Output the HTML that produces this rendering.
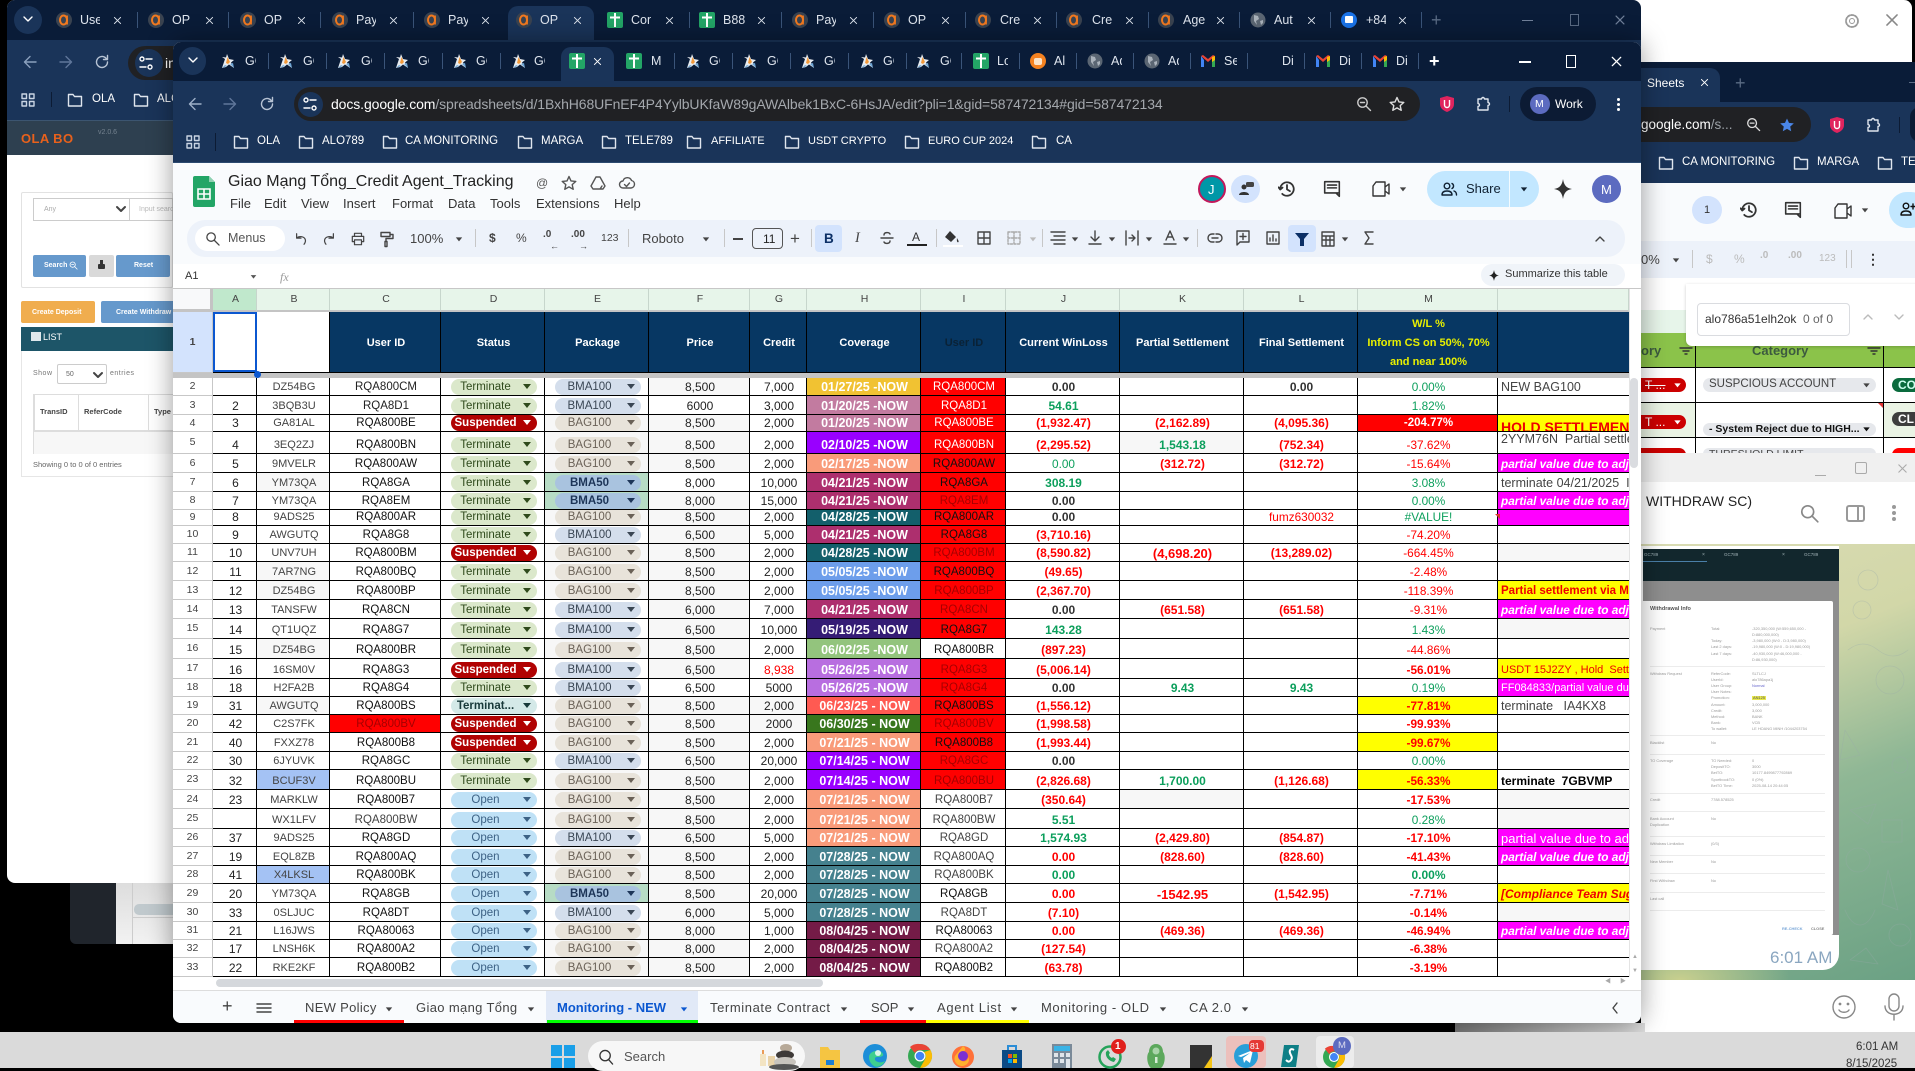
<!DOCTYPE html>
<html><head><meta charset="utf-8"><title>Giao Mang Tong</title>
<style>
*{box-sizing:border-box}
html,body{margin:0;padding:0;width:1915px;height:1068px;overflow:hidden;background:#000;font-family:"Liberation Sans","Noto Sans CJK SC",sans-serif}
.a{position:absolute}
.t{position:absolute;white-space:nowrap;line-height:1}
svg.a{overflow:visible}
.i{fill:none;stroke:currentColor;stroke-width:1.4;stroke-linecap:round;stroke-linejoin:round}
.tb{color:#dfe5ee;font-size:12.5px}
.bm{color:#fff;font-size:11.5px}
.mn{color:#333;font-size:13px}
.tl{color:#444;font-size:12px}
.sep{position:absolute;width:1px;background:#c7c7c7}
.vs{position:absolute;width:1px;height:16px;background:#3a5479}
#T{position:absolute;left:173px;top:289px;border-collapse:separate;border-spacing:0;table-layout:fixed;width:1456px;font:11.5px/15px "Liberation Sans",sans-serif;color:#222}
#T td,#T th{padding:0;border-right:1px solid #000;border-bottom:1px solid #000;text-align:center;overflow:hidden;white-space:nowrap;vertical-align:bottom}
#T td{padding-left:2px}
#T tr td:nth-child(7),#T tr td:nth-child(8){font-size:12px}
#T tr td:nth-child(3){font-size:11px}
#T tr td:nth-child(2){font-size:12px}
#T th{border-right:1px solid #c7c7c7;border-bottom:1px solid #c7c7c7;background:#fff;color:#444;font-size:10.5px;font-weight:normal;vertical-align:middle}
#T tr.L td,#T tr.L th{background:#e7f5ea;border-right:1px solid #c7d6cc;border-bottom:2px solid #c4c4c4;color:#444;font-size:10.5px;vertical-align:middle;font-weight:normal}
#T tr.H td{background:#073763;color:#fff;font-weight:bold;font-size:11px;line-height:19px;white-space:normal;vertical-align:middle;padding-top:3px}
.g{color:#444}
.f{background:#f7f7f7}
.p{display:inline-block;width:86px;height:16px;margin-top:-1px;line-height:16px;border-radius:8px;font-weight:normal;position:relative;vertical-align:top;padding-right:16px;font-size:11.5px}
.p:after{content:"";position:absolute;right:6px;top:5px;border:4px solid transparent;border-top:5px solid currentColor;border-bottom:0}
.te{background:#dbe8cb;color:#2f4a1c}
.tq{background:#d4e9e8;color:#18393a;font-weight:bold}
.su{background:#b10202;color:#fff;font-weight:bold}
.op{background:#bfe1f6;color:#3d6285}
.bm1{background:#d4deec;color:#3a4654}
.ba{background:#e8e3da;color:#6a6157}
.b5{background:#a9c3df;color:#1d3558;font-weight:bold}
.b5c{background:#b7dcc5}
.d{color:#fff;font-weight:bold;font-size:12.5px}
.r1{background:#f00;color:#fff}
.r2{background:#f00;color:#111}
.r3{background:#f00;color:#a60000}
.J{color:#f00;font-weight:bold;font-size:12px}
.G{color:#0c9f5c;font-weight:bold;font-size:12px}
.Z{color:#333;font-weight:bold;font-size:12px}
.M{color:#f00;font-size:11.8px}
.Ng{color:#0c9f5c;font-size:11.8px}
.Y{background:#ff0}
.n{text-align:left!important;padding-left:3px!important;border-right:0!important;color:#444;font-size:12.5px}
.mg{background:#f0f;color:#fff;font-weight:bold;font-style:italic;font-size:11.8px}
.ye{background:#ff0;color:#e00;font-weight:bold;font-size:11.5px}
.bl{background:#a4c2f4}
.md{font-size:3.9px;color:#9a9a9a}
.hr{position:absolute;left:1650px;width:175px;height:1px;background:#ececec}
</style></head><body>
<svg width="0" height="0" style="position:absolute">
<defs>
<symbol id="fd" viewBox="0 0 16 16"><path class="i" d="M1.5 2.5h4.5l1.5 2h7v9.5h-13z"/></symbol>
<symbol id="xx" viewBox="0 0 16 16"><path class="i" d="M3.5 3.5l9 9M12.5 3.5l-9 9"/></symbol>
<symbol id="gr" viewBox="0 0 16 16"><path class="i" d="M2 2h4.5v4.5H2zM9.5 2H14v4.5H9.5zM2 9.5h4.5V14H2zM9.5 9.5H14V14H9.5z"/></symbol>
<symbol id="bk" viewBox="0 0 16 16"><path class="i" d="M14 8H2.5M8 2.5L2.5 8 8 13.500"/></symbol>
<symbol id="fw" viewBox="0 0 16 16"><path class="i" d="M2 8h11.500M8 2.500L13.500 8 8 13.500"/></symbol>
<symbol id="rl" viewBox="0 0 16 16"><path class="i" d="M13.500 8a5.500 5.500 0 1 1-1.600-3.900L13.500 5.500M13.500 1.500v4h-4"/></symbol>
<symbol id="hs" viewBox="0 0 16 16"><path class="i" style="stroke-width:1.600" d="M2 8a6 6 0 1 1 1.800 4.300M.5 6.500L2 8.500l2-1.800M8 4.500V8.300l2.600 1.600"/></symbol>
<symbol id="zm" viewBox="0 0 16 16"><circle class="i" cx="6.500" cy="6.500" r="4.700"/><path class="i" d="M10 10l4.500 4.500M4.500 6.500h4"/></symbol>
<symbol id="st" viewBox="0 0 16 16"><path class="i" d="M8 1.500l2 4.400 4.800.5-3.600 3.200 1 4.700L8 11.900l-4.200 2.400 1-4.700L1.200 6.400 6 5.900z"/></symbol>
<symbol id="pz" viewBox="0 0 16 16"><path class="i" d="M3 3h3.500a1.500 1.500 0 0 1 3 0H13v3.500a1.500 1.500 0 0 1 0 3V14H3v-3.500a1.500 1.500 0 0 0 0-3z"/></symbol>
<symbol id="sl" viewBox="0 0 16 16"><circle class="i" cx="4" cy="4" r="2"/><circle class="i" cx="12" cy="12" r="2"/><path class="i" d="M8 4h6M2 12h6"/></symbol>
<symbol id="ol" viewBox="0 0 16 16"><circle cx="8" cy="8" r="8" fill="#3a4350"/><ellipse cx="7.500" cy="8" rx="3.500" ry="4.500" fill="none" stroke="#f47a1f" stroke-width="2"/><path d="M11 3.500v9" stroke="#f47a1f" stroke-width="1.800"/></symbol>
<symbol id="gs" viewBox="0 0 16 16"><rect x="0" width="16" height="16" rx="2" fill="#23a566"/><path d="M8 1v14M3 5.500h10" stroke="#fff" stroke-width="2"/></symbol>
<symbol id="gc" viewBox="0 0 16 16"><path d="M2 15L5 6 2 4l4 .5L7 1l2 5 5 1-3 2.500L14 15l-5-3.500L6 14z" fill="#e8ecf0"/><path d="M6 10l1.500-6L10 9l-2 2z" fill="#f39a3b"/><path d="M2 15l3-3 2 1zM10 11l4 4-1-5z" fill="#6ea6d6"/></symbol>
<symbol id="gl" viewBox="0 0 16 16"><circle cx="8" cy="8" r="7.500" fill="#5b6673"/><path d="M4 3l4 1 1 3-3 2 1 4-3-4zM10 9l3-1 0 3-2 2z" fill="#aab2bb"/></symbol>
<symbol id="gm" viewBox="0 0 16 16"><path d="M1 3v11h3V7z" fill="#4285f4"/><path d="M15 3v11h-3V7z" fill="#34a853"/><path d="M1 3l7 6 7-6-2-1-5 4-5-4z" fill="#ea4335"/><path d="M12 4l3-1v4l-3 2z" fill="#fbbc04"/></symbol>
<symbol id="ar" viewBox="-1 -1 10 10"><path d="M0 2h8L4 7z" fill="currentColor"/></symbol>
</defs></svg>

<!-- third window behind -->
<div class="a" style="left:70px;top:860px;width:110px;height:84px;background:#20252c;border-radius:0 0 0 6px"></div>
<div class="a" style="left:116px;top:880px;width:60px;height:64px;background:linear-gradient(#dcdcdc,#f2f2f2)"></div>
<div class="a" style="left:132px;top:880px;width:1px;height:64px;background:#ccc"></div>
<div class="a" style="left:134px;top:904px;width:45px;height:11px;background:#c0c9cd;border-radius:5px"></div>
<div class="a" style="left:132px;top:917px;width:45px;height:1px;background:#ccc"></div>

<!-- top right white window -->
<div class="a" style="left:1600px;top:0;width:312px;height:63px;background:#fff;border-radius:0 8px 0 0"></div>
<svg class="a" style="left:1844px;top:13px;color:#999" width="16" height="16" viewBox="0 0 16 16"><circle class="i" cx="8" cy="8" r="2.500" style="stroke-width:1"/><circle class="i" cx="8" cy="8" r="6" stroke-dasharray="2.500 1.400" style="stroke-width:1.800"/></svg>
<svg class="a" style="left:1883px;top:11px;color:#888" width="18" height="18"><use href="#xx"/></svg>

<!-- back chrome window -->
<div class="a" style="left:7px;top:0;width:1634px;height:883px;background:#fff;border-radius:8px;overflow:hidden">
 <div class="a" style="left:0;top:0;width:1634px;height:40px;background:#0a1c38"></div>
 <div class="a" style="left:0;top:40px;width:1634px;height:80px;background:#1a3459"></div>
 <div class="a" style="left:0;top:120px;width:1634px;height:35px;background:#2e4050;border-top:1px solid #3c5570"></div>
</div>
<div class="a" style="left:14px;top:6px;width:28px;height:28px;background:#1a3459;border-radius:14px"></div>
<svg class="a" style="left:22px;top:15px;color:#fff" width="12" height="10" viewBox="0 0 12 10"><path class="i" d="M2 2l4 4 4-4"/></svg>
<div class="a" style="left:508px;top:6px;width:86px;height:34px;background:#1a3459;border-radius:10px 10px 0 0"></div>

<svg class="a" style="left:56px;top:12px" width="16" height="16"><use href="#ol"/></svg><span class="t tb" style="left:80px;top:14px;width:20px;overflow:hidden">Use</span><svg class="a" style="left:112px;top:15px;color:#dfe5ee" width="11" height="11"><use href="#xx"/></svg><div class="vs" style="left:137px;top:12px"></div>
<svg class="a" style="left:148px;top:12px" width="16" height="16"><use href="#ol"/></svg><span class="t tb" style="left:172px;top:14px;width:20px;overflow:hidden">OP</span><svg class="a" style="left:204px;top:15px;color:#dfe5ee" width="11" height="11"><use href="#xx"/></svg><div class="vs" style="left:228px;top:12px"></div>
<svg class="a" style="left:240px;top:12px" width="16" height="16"><use href="#ol"/></svg><span class="t tb" style="left:264px;top:14px;width:20px;overflow:hidden">OP</span><svg class="a" style="left:296px;top:15px;color:#dfe5ee" width="11" height="11"><use href="#xx"/></svg><div class="vs" style="left:320px;top:12px"></div>
<svg class="a" style="left:332px;top:12px" width="16" height="16"><use href="#ol"/></svg><span class="t tb" style="left:356px;top:14px;width:20px;overflow:hidden">Pay</span><svg class="a" style="left:388px;top:15px;color:#dfe5ee" width="11" height="11"><use href="#xx"/></svg><div class="vs" style="left:413px;top:12px"></div>
<svg class="a" style="left:424px;top:12px" width="16" height="16"><use href="#ol"/></svg><span class="t tb" style="left:448px;top:14px;width:20px;overflow:hidden">Pay</span><svg class="a" style="left:480px;top:15px;color:#dfe5ee" width="11" height="11"><use href="#xx"/></svg>
<svg class="a" style="left:516px;top:12px" width="16" height="16"><use href="#ol"/></svg><span class="t tb" style="left:540px;top:14px;width:20px;overflow:hidden">OP</span><svg class="a" style="left:572px;top:15px;color:#dfe5ee" width="11" height="11"><use href="#xx"/></svg>
<svg class="a" style="left:607px;top:12px" width="16" height="16"><use href="#gs"/></svg><span class="t tb" style="left:631px;top:14px;width:20px;overflow:hidden">Con</span><svg class="a" style="left:664px;top:15px;color:#dfe5ee" width="11" height="11"><use href="#xx"/></svg><div class="vs" style="left:689px;top:12px"></div>
<svg class="a" style="left:699px;top:12px" width="16" height="16"><use href="#gs"/></svg><span class="t tb" style="left:723px;top:14px;width:22px;overflow:hidden">B88</span><svg class="a" style="left:756px;top:15px;color:#dfe5ee" width="11" height="11"><use href="#xx"/></svg><div class="vs" style="left:781px;top:12px"></div>
<svg class="a" style="left:792px;top:12px" width="16" height="16"><use href="#ol"/></svg><span class="t tb" style="left:816px;top:14px;width:20px;overflow:hidden">Pay</span><svg class="a" style="left:848px;top:15px;color:#dfe5ee" width="11" height="11"><use href="#xx"/></svg><div class="vs" style="left:873px;top:12px"></div>
<svg class="a" style="left:884px;top:12px" width="16" height="16"><use href="#ol"/></svg><span class="t tb" style="left:908px;top:14px;width:20px;overflow:hidden">OP</span><svg class="a" style="left:940px;top:15px;color:#dfe5ee" width="11" height="11"><use href="#xx"/></svg><div class="vs" style="left:965px;top:12px"></div>
<svg class="a" style="left:975px;top:12px" width="16" height="16"><use href="#ol"/></svg><span class="t tb" style="left:1000px;top:14px;width:21px;overflow:hidden">Cre</span><svg class="a" style="left:1032px;top:15px;color:#dfe5ee" width="11" height="11"><use href="#xx"/></svg><div class="vs" style="left:1056px;top:12px"></div>
<svg class="a" style="left:1066px;top:12px" width="16" height="16"><use href="#ol"/></svg><span class="t tb" style="left:1092px;top:14px;width:21px;overflow:hidden">Cre</span><svg class="a" style="left:1124px;top:15px;color:#dfe5ee" width="11" height="11"><use href="#xx"/></svg><div class="vs" style="left:1148px;top:12px"></div>
<svg class="a" style="left:1158px;top:12px" width="16" height="16"><use href="#ol"/></svg><span class="t tb" style="left:1183px;top:14px;width:22px;overflow:hidden">Age</span><svg class="a" style="left:1215px;top:15px;color:#dfe5ee" width="11" height="11"><use href="#xx"/></svg><div class="vs" style="left:1239px;top:12px"></div>
<svg class="a" style="left:1250px;top:12px" width="16" height="16"><use href="#gl"/></svg><span class="t tb" style="left:1274px;top:14px;width:21px;overflow:hidden">Aut</span><svg class="a" style="left:1306px;top:15px;color:#dfe5ee" width="11" height="11"><use href="#xx"/></svg><div class="vs" style="left:1330px;top:12px"></div>
<div class="a" style="left:1341px;top:12px;width:16px;height:16px;border-radius:8px;background:#1a73e8"></div><div class="a" style="left:1345px;top:16px;width:8px;height:7px;background:#fff;border-radius:1px"></div><span class="t tb" style="left:1366px;top:14px;width:20px;overflow:hidden">+84</span><svg class="a" style="left:1397px;top:15px;color:#dfe5ee" width="11" height="11"><use href="#xx"/></svg><div class="vs" style="left:1421px;top:12px"></div>
<span class="t" style="left:1431px;top:11px;color:#5a6b84;font-size:18px">+</span>
<div class="a" style="left:1522px;top:20px;width:11px;height:1px;background:#71819a"></div>
<div class="a" style="left:1570px;top:14px;width:9px;height:12px;border:1px solid #5a6b84"></div>
<svg class="a" style="left:1613px;top:13px;color:#71819a" width="14" height="14"><use href="#xx"/></svg>

<svg class="a" style="left:22px;top:54px;color:#8aa0bd" width="16" height="16"><use href="#bk"/></svg>
<svg class="a" style="left:58px;top:54px;color:#5f769a" width="16" height="16"><use href="#fw"/></svg>
<svg class="a" style="left:94px;top:54px;color:#b7c3d4" width="16" height="16"><use href="#rl"/></svg>
<div class="a" style="left:128px;top:46px;width:60px;height:34px;border-radius:17px 0 0 17px;background:#202124"></div>
<div class="a" style="left:135px;top:49px;width:28px;height:28px;border-radius:14px;background:#1a3459"></div>
<svg class="a" style="left:138px;top:55px;color:#fff" width="16" height="16"><use href="#sl"/></svg>
<span class="t" style="left:165px;top:56px;color:#fff;font-size:14px">in</span>
<svg class="a" style="left:20px;top:92px;color:#c9d4e3" width="16" height="16"><use href="#gr"/></svg>
<div class="a" style="left:51px;top:92px;width:1px;height:15px;background:#0c1b34"></div>
<svg class="a" style="left:67px;top:92px;color:#dfe5ee" width="16" height="16"><use href="#fd"/></svg><span class="t bm" style="left:92px;top:94px">OLA</span>
<svg class="a" style="left:133px;top:92px;color:#dfe5ee" width="16" height="16"><use href="#fd"/></svg><span class="t bm" style="left:157px;top:94px">ALO</span>

<span class="t" style="left:21px;top:132px;color:#e8611c;font-size:13px;font-weight:bold;letter-spacing:.4px">OLA BO</span>
<span class="t" style="left:98px;top:129px;color:#74828f;font-size:7px">v2.0.6</span>

<div class="a" style="left:21px;top:192px;width:152px;height:96px;background:#fff;border:1px solid #e2e2e2;border-radius:2px"></div>
<div class="a" style="left:33px;top:198px;width:140px;height:23px;border:1px solid #ccc"></div>
<div class="a" style="left:129px;top:198px;width:1px;height:23px;background:#ccc"></div>
<span class="t" style="left:44px;top:206px;color:#aaa;font-size:7px">Any</span>
<svg class="a" style="left:116px;top:205px;color:#444" width="10" height="8" viewBox="0 0 10 8"><path class="i" style="stroke-width:2" d="M1 2l4 4 4-4"/></svg>
<span class="t" style="left:139px;top:206px;color:#bbb;font-size:7px">Input search</span>
<div class="a" style="left:33px;top:255px;width:53px;height:22px;background:#6699cc;border-radius:2px"></div>
<span class="t" style="left:44px;top:262px;color:#fff;font-size:7px;font-weight:bold">Search</span>
<svg class="a" style="left:69px;top:261px;color:#fff" width="9" height="9"><use href="#zm"/></svg>
<div class="a" style="left:89px;top:255px;width:25px;height:22px;background:#d9d9d9;border-radius:2px"></div>
<div class="a" style="left:98px;top:264px;width:7px;height:5px;background:#333;border-radius:1px"></div>
<div class="a" style="left:100px;top:260px;width:3px;height:5px;background:#333"></div>
<div class="a" style="left:116px;top:255px;width:54px;height:22px;background:#6699cc;border-radius:2px"></div>
<span class="t" style="left:134px;top:262px;color:#fff;font-size:7px;font-weight:bold">Reset</span>
<div class="a" style="left:21px;top:301px;width:74px;height:22px;background:#f0ad4e;border-radius:2px"></div>
<span class="t" style="left:32px;top:309px;color:#fff;font-size:7px;font-weight:bold">Create Deposit</span>
<div class="a" style="left:101px;top:301px;width:75px;height:22px;background:#6699cc;border-radius:2px"></div>
<span class="t" style="left:116px;top:309px;color:#fff;font-size:7px;font-weight:bold">Create Withdraw</span>
<div class="a" style="left:21px;top:327px;width:155px;height:150px;border:1px solid #e6e6e6;background:#fff"></div>
<div class="a" style="left:21px;top:327px;width:155px;height:24px;background:#1d5568"></div>
<div class="a" style="left:31px;top:332px;width:10px;height:9px;background:#dfe8ec"></div>
<span class="t" style="left:43px;top:333px;color:#fff;font-size:9px">LIST</span>
<span class="t" style="left:33px;top:370px;color:#777;font-size:7px;letter-spacing:.5px">Show</span>
<div class="a" style="left:57px;top:364px;width:50px;height:20px;border:1px solid #ccc;border-radius:2px"></div>
<span class="t" style="left:66px;top:371px;color:#666;font-size:7px">50</span>
<svg class="a" style="left:93px;top:371px;color:#444" width="10" height="8" viewBox="0 0 10 8"><path class="i" style="stroke-width:2" d="M1 2l4 4 4-4"/></svg>
<span class="t" style="left:110px;top:370px;color:#777;font-size:7px;letter-spacing:.5px">entries</span>
<div class="a" style="left:33px;top:394px;width:143px;height:60px;border:1px solid #ddd;border-left:2px solid #ddd"></div>
<div class="a" style="left:34px;top:430px;width:142px;height:24px;background:#f7f7f7;border-top:2px solid #ddd"></div>
<div class="a" style="left:78px;top:394px;width:1px;height:36px;background:#ddd"></div>
<div class="a" style="left:148px;top:394px;width:1px;height:36px;background:#ddd"></div>
<span class="t" style="left:40px;top:408px;color:#444;font-size:7.500px;font-weight:bold">TransID</span>
<span class="t" style="left:84px;top:408px;color:#444;font-size:7.500px;font-weight:bold">ReferCode</span>
<span class="t" style="left:154px;top:408px;color:#444;font-size:7.500px;font-weight:bold">Type</span>
<span class="t" style="left:33px;top:461px;color:#666;font-size:7.500px">Showing 0 to 0 of 0 entries</span>

<!-- second chrome -->
<div class="a" style="left:1641px;top:62px;width:274px;height:40px;background:#0a1c38"></div>
<div class="a" style="left:1641px;top:68px;width:79px;height:34px;background:#1a3459;border-radius:0 10px 0 0"></div>
<div class="a" style="left:1641px;top:102px;width:274px;height:81px;background:#1a3459"></div>
<span class="t" style="left:1647px;top:77px;color:#fff;font-size:12px">Sheets</span>
<svg class="a" style="left:1699px;top:77px;color:#fff" width="11" height="11"><use href="#xx"/></svg>
<span class="t" style="left:1735px;top:74px;color:#5a6b84;font-size:18px">+</span>
<div class="a" style="left:1909px;top:82px;width:6px;height:1px;background:#5a6b84"></div>
<div class="a" style="left:1641px;top:107px;width:170px;height:35px;background:#202124;border-radius:0 18px 18px 0"></div>
<span class="t" style="left:1641px;top:118px;color:#fff;font-size:13.500px">google.com<span style="color:#9aa0a6">/s...</span></span>
<svg class="a" style="left:1746px;top:117px;color:#ddd" width="15" height="15"><use href="#zm"/></svg>
<svg class="a" style="left:1779px;top:117px" width="16" height="16" viewBox="0 0 16 16"><path fill="#4a86e8" d="M8 1.500l2 4.400 4.800.5-3.600 3.200 1 4.700L8 11.900l-4.200 2.400 1-4.700L1.200 6.400 6 5.900z"/></svg>
<svg class="a" style="left:1830px;top:117px" width="14" height="16" viewBox="0 0 14 16"><path fill="#e0245e" d="M7 0l7 2v6c0 4-3 6.500-7 8-4-1.500-7-4-7-8V2z"/><path d="M4.500 4v5a2.500 2.500 0 0 0 5 0V4" fill="none" stroke="#fff" stroke-width="1.400"/></svg>
<svg class="a" style="left:1865px;top:117px;color:#dfe5ee" width="16" height="16"><use href="#pz"/></svg>
<div class="a" style="left:1899px;top:117px;width:1px;height:16px;background:#0c1b34"></div>
<div class="a" style="left:1910px;top:107px;width:10px;height:35px;background:#0c1b34;border-radius:16px 0 0 16px"></div>
<svg class="a" style="left:1658px;top:155px;color:#dfe5ee" width="16" height="16"><use href="#fd"/></svg><span class="t bm" style="left:1682px;top:157px">CA MONITORING</span>
<svg class="a" style="left:1793px;top:155px;color:#dfe5ee" width="16" height="16"><use href="#fd"/></svg><span class="t bm" style="left:1817px;top:157px">MARGA</span>
<svg class="a" style="left:1877px;top:155px;color:#dfe5ee" width="16" height="16"><use href="#fd"/></svg><span class="t bm" style="left:1901px;top:157px">TELE</span>
<div class="a" style="left:1641px;top:183px;width:274px;height:270px;background:#fff"></div>
<div class="a" style="left:1641px;top:183px;width:274px;height:58px;background:#f9fbfd"></div>
<div class="a" style="left:1641px;top:241px;width:274px;height:37px;background:#edf2fa"></div>
<div class="a" style="left:1692px;top:196px;width:30px;height:28px;border-radius:15px;background:#d3e3fd"></div>
<span class="t" style="left:1704px;top:205px;color:#333;font-size:11px">1</span>
<svg class="a" style="left:1740px;top:201px;color:#333" width="18" height="18"><use href="#hs"/></svg>
<svg class="a" style="left:1784px;top:201px;color:#333" width="18" height="18" viewBox="0 0 16 16"><path class="i" d="M1.500 1.500h13v10h-13zM14.500 11.500v3l-3-3M4 4.500h8M4 7h8"/></svg>
<svg class="a" style="left:1833px;top:203px;color:#333" width="20" height="16" viewBox="0 0 20 16"><path class="i" d="M5 1h9v14H2V5zM14 6l4-3v10l-4-3"/></svg>
<svg class="a" style="left:1861px;top:206px;color:#444" width="8" height="8"><use href="#ar"/></svg>
<div class="a" style="left:1889px;top:192px;width:40px;height:36px;border-radius:18px;background:#c2e7ff"></div>
<svg class="a" style="left:1900px;top:202px;color:#111" width="16" height="14" viewBox="0 0 16 14"><circle class="i" cx="6" cy="4" r="2.800"/><path class="i" d="M1 13c0-3 2-4 5-4s5 1 5 4zM13 2v5M11 4.500h5"/></svg>
<span class="t" style="left:1641px;top:253px;color:#444;font-size:13px">0%</span>
<svg class="a" style="left:1672px;top:256px;color:#444" width="8" height="8"><use href="#ar"/></svg>
<div class="sep" style="left:1692px;top:250px;height:18px"></div>
<span class="t" style="left:1706px;top:253px;color:#bbb;font-size:12px">$</span>
<span class="t" style="left:1734px;top:253px;color:#bbb;font-size:12px">%</span>
<span class="t" style="left:1760px;top:251px;color:#bbb;font-size:10px;font-weight:bold">.0</span>
<span class="t" style="left:1788px;top:251px;color:#bbb;font-size:10px;font-weight:bold">.00</span>
<span class="t" style="left:1819px;top:254px;color:#bbb;font-size:10px">123</span>
<div class="sep" style="left:1846px;top:250px;height:18px"></div><div class="sep" style="left:1851px;top:250px;height:18px"></div>
<span class="t" style="left:1866px;top:252px;color:#333;font-size:14px;font-weight:bold">⋮</span>
<div class="a" style="left:1641px;top:310px;width:274px;height:23px;background:#e7f5ea"></div>
<div class="a" style="left:1641px;top:333px;width:274px;height:34px;background:#8bc34a"></div>
<span class="t" style="left:1641px;top:344px;color:#3c5a3f;font-size:13px;font-weight:bold">ory</span>
<span class="t" style="left:1752px;top:344px;color:#3c5a3f;font-size:13px;font-weight:bold">Category</span>
<svg class="a" style="left:1680px;top:347px;color:#333" width="12" height="8" viewBox="0 0 12 8"><path class="i" d="M0 1h12M3 4h6M5 7h2"/></svg>
<svg class="a" style="left:1868px;top:347px;color:#333" width="12" height="8" viewBox="0 0 12 8"><path class="i" d="M0 1h12M3 4h6M5 7h2"/></svg>
<div class="a" style="left:1641px;top:367px;width:274px;height:1px;background:#000"></div>
<div class="a" style="left:1641px;top:402px;width:274px;height:1px;background:#000"></div>
<div class="a" style="left:1641px;top:437px;width:274px;height:1px;background:#000"></div>
<div class="a" style="left:1641px;top:403px;width:54px;height:34px;background:#eaf3e4"></div>
<div class="a" style="left:1884px;top:403px;width:31px;height:34px;background:#eaf3e4"></div>
<div class="a" style="left:1695px;top:333px;width:1px;height:120px;background:#000"></div>
<div class="a" style="left:1883px;top:333px;width:1px;height:120px;background:#000"></div>
<div class="a" style="left:1641px;top:378px;width:45px;height:14px;background:#cc0000;border-radius:0 7px 7px 0"></div>
<span class="t" style="left:1645px;top:379px;color:#fff;font-size:12px;text-decoration:line-through">T ...</span>
<svg class="a" style="left:1673px;top:381px;color:#fff" width="9" height="8"><use href="#ar"/></svg>
<div class="a" style="left:1641px;top:415px;width:45px;height:14px;background:#cc0000;border-radius:0 7px 7px 0"></div>
<span class="t" style="left:1645px;top:416px;color:#fff;font-size:12px">T ...</span>
<svg class="a" style="left:1673px;top:418px;color:#fff" width="9" height="8"><use href="#ar"/></svg>
<div class="a" style="left:1641px;top:448px;width:45px;height:14px;background:#cc0000;border-radius:0 7px 7px 0"></div>
<div class="a" style="left:1703px;top:378px;width:173px;height:14px;background:#e6e8ec;border-radius:7px"></div>
<span class="t" style="left:1709px;top:379px;color:#444;font-size:11.500px">SUSPCIOUS ACCOUNT</span>
<svg class="a" style="left:1862px;top:381px;color:#444" width="9" height="8"><use href="#ar"/></svg>
<div class="a" style="left:1703px;top:423px;width:173px;height:13px;background:#e6e8ec;border-radius:7px"></div>
<span class="t" style="left:1709px;top:424px;color:#111;font-size:10.500px;font-weight:bold">- System Reject due to HIGH...</span>
<svg class="a" style="left:1862px;top:425px;color:#111" width="9" height="8"><use href="#ar"/></svg>
<div class="a" style="left:1703px;top:448px;width:173px;height:12px;background:#e6e8ec;border-radius:7px"></div>
<span class="t" style="left:1709px;top:449px;color:#444;font-size:10.500px">THRESHOLD LIMIT</span>
<svg class="a" style="left:1878px;top:403px" width="5" height="5"><path d="M0 0h5v5z" fill="#d33"/></svg>
<div class="a" style="left:1892px;top:378px;width:30px;height:14px;background:#0a6b3d;border-radius:7px 0 0 7px"></div>
<span class="t" style="left:1898px;top:379px;color:#cfe;font-size:12px;font-weight:bold">CO</span>
<div class="a" style="left:1892px;top:412px;width:30px;height:14px;background:#3d3d3d;border-radius:7px 0 0 7px"></div>
<span class="t" style="left:1898px;top:413px;color:#fff;font-size:12px;font-weight:bold">CL</span>
<div class="a" style="left:1892px;top:448px;width:30px;height:14px;background:#f00;border-radius:7px 0 0 7px"></div>
<div class="a" style="left:1686px;top:284px;width:232px;height:62px;background:#fff;border-radius:0 0 0 6px;box-shadow:0 1px 3px rgba(0,0,0,.2)"></div>
<div class="a" style="left:1697px;top:303px;width:153px;height:33px;border:1px solid #dadce0;border-radius:4px;background:#fff"></div>
<span class="t" style="left:1705px;top:313px;color:#333;font-size:12px">alo786a51elh2ok</span>
<span class="t" style="left:1803px;top:313px;color:#666;font-size:12px">0 of 0</span>
<svg class="a" style="left:1863px;top:313px;color:#bbb" width="10" height="8" viewBox="0 0 10 8"><path class="i" d="M1 6l4-4 4 4"/></svg>
<svg class="a" style="left:1894px;top:313px;color:#bbb" width="10" height="8" viewBox="0 0 10 8"><path class="i" d="M1 2l4 4 4-4"/></svg>

<!-- telegram -->
<div class="a" style="left:1641px;top:453px;width:274px;height:579px;background:#fff"></div>
<div class="a" style="left:1641px;top:453px;width:274px;height:29px;background:#f0f0f0"></div>
<div class="a" style="left:1815px;top:475px;width:11px;height:1px;background:#aaa"></div>
<div class="a" style="left:1855px;top:462px;width:12px;height:12px;border:1px solid #aaa;border-radius:2px"></div>
<svg class="a" style="left:1896px;top:462px;color:#aaa" width="13" height="13"><use href="#xx"/></svg>
<span class="t" style="left:1646px;top:494px;color:#222;font-size:14px">WITHDRAW SC)</span>
<svg class="a" style="left:1800px;top:504px;color:#888" width="19" height="19" viewBox="0 0 16 16"><circle class="i" cx="6.500" cy="6.500" r="5"/><path class="i" d="M10 10l5 5"/></svg>
<div class="a" style="left:1846px;top:505px;width:19px;height:17px;border:2px solid #999;border-radius:3px"></div><div class="a" style="left:1857px;top:505px;width:2px;height:17px;background:#999"></div>
<div class="a" style="left:1892px;top:505px;width:4px;height:4px;border-radius:2px;background:#999"></div><div class="a" style="left:1892px;top:511px;width:4px;height:4px;border-radius:2px;background:#999"></div><div class="a" style="left:1892px;top:517px;width:4px;height:4px;border-radius:2px;background:#999"></div>
<div class="a" style="left:1640px;top:544px;width:275px;height:436px;background:radial-gradient(ellipse 110px 50px at 40px 436px,#c8cf8e,transparent),linear-gradient(158deg,#dadcb4 0%,#d2d7a8 30%,#8fb795 58%,#6ba184 100%)"></div>
<svg class="a" style="left:1840px;top:550px;color:#9aa;opacity:.35" width="75" height="430" viewBox="0 0 75 430"><g class="i" style="stroke-width:.8"><circle cx="28" cy="30" r="10"/><circle cx="22" cy="60" r="9"/><path d="M8 100c10-8 20-8 30 0s20 8 30 0"/><circle cx="50" cy="130" r="14"/><path d="M5 180l15 25-20 5z"/><circle cx="60" cy="215" r="8"/><path d="M10 260l18 14 8-20zM42 270h20v22H42z"/><circle cx="18" cy="310" r="12"/><path d="M48 320l10 40-16-6zM5 360c8 20 22 20 30 0"/><circle cx="60" cy="385" r="11"/><path d="M10 410l16-12 12 16z"/></g></svg>
<div class="a" style="left:1640px;top:546px;width:199px;height:424px;background:#fff;border-radius:0 0 16px 0"></div>
<div class="a" style="left:1643px;top:549px;width:196px;height:32px;background:#12272d"></div>
<div class="a" style="left:1643px;top:561px;width:64px;height:1px;background:#4a7fa8"></div>
<span class="t" style="left:1644px;top:553px;color:#9fb0b5;font-size:4.500px">GC789</span>
<span class="t" style="left:1702px;top:553px;color:#9fb0b5;font-size:5px">×</span>
<span class="t" style="left:1724px;top:553px;color:#9fb0b5;font-size:4.500px">GC789</span>
<span class="t" style="left:1782px;top:553px;color:#9fb0b5;font-size:5px">×</span>
<span class="t" style="left:1804px;top:553px;color:#9fb0b5;font-size:4.500px">GC789</span>
<div class="a" style="left:1643px;top:581px;width:196px;height:354px;background:#8e8e8e"></div>
<div class="a" style="left:1640px;top:601px;width:193px;height:334px;background:#fff;border-radius:2px"></div>
<span class="t" style="left:1650px;top:607px;color:#555;font-size:5.500px;font-weight:bold">Withdrawal Info</span>
<span class="t md" style="left:1650px;top:627px">Payment</span><span class="t md" style="left:1711px;top:627px">Total:</span><span class="t md" style="left:1752px;top:627px">-320,350,000 (W:559,650,000 -</span>
<span class="t md" style="left:1752px;top:633px">D:880,000,000)</span>
<span class="t md" style="left:1711px;top:639px">Today:</span><span class="t md" style="left:1752px;top:639px">-3,980,000 (W:0 - D:3,980,000)</span>
<span class="t md" style="left:1711px;top:645px">Last 2 days:</span><span class="t md" style="left:1752px;top:645px">-19,980,000 (W:0 - D:19,980,000)</span>
<span class="t md" style="left:1711px;top:652px">Last 7 days:</span><span class="t md" style="left:1752px;top:652px">-40,930,000 (W:46,000,000 -</span>
<span class="t md" style="left:1752px;top:658px">D:86,930,000)</span>
<div class="hr" style="top:666px"></div>
<span class="t md" style="left:1650px;top:672px">Withdraw Request</span><span class="t md" style="left:1711px;top:672px">ReferCode:</span><span class="t md" style="left:1752px;top:672px">SLTLCJ</span>
<span class="t md" style="left:1711px;top:678px">UserId:</span><span class="t md" style="left:1752px;top:678px">alo786apa1j</span>
<span class="t md" style="left:1711px;top:684px">User Group:</span><span class="t md" style="left:1752px;top:684px;color:#66c">Normal</span>
<span class="t md" style="left:1711px;top:690px">User Notes:</span>
<span class="t md" style="left:1711px;top:696px">Promotion:</span><span class="t md" style="left:1752px;top:696px;background:#e8e84c;color:#555;padding:0 1px">AN125</span>
<span class="t md" style="left:1711px;top:703px">Amount:</span><span class="t md" style="left:1752px;top:703px">3,000,000</span>
<span class="t md" style="left:1711px;top:709px">Credit:</span><span class="t md" style="left:1752px;top:709px">3,000</span>
<span class="t md" style="left:1711px;top:715px">Method:</span><span class="t md" style="left:1752px;top:715px">BANK</span>
<span class="t md" style="left:1711px;top:721px">Bank:</span><span class="t md" style="left:1752px;top:721px">VCB</span>
<span class="t md" style="left:1711px;top:727px">To wallet:</span><span class="t md" style="left:1752px;top:727px">LE HOANG MINH /1044203754</span>
<div class="hr" style="top:735px"></div>
<span class="t md" style="left:1650px;top:741px">Blacklist</span><span class="t md" style="left:1711px;top:741px">No</span>
<div class="hr" style="top:754px"></div>
<span class="t md" style="left:1650px;top:759px">TO Coverage</span><span class="t md" style="left:1711px;top:759px">TO Needed:</span><span class="t md" style="left:1752px;top:759px">0</span>
<span class="t md" style="left:1711px;top:765px">DepositTO:</span><span class="t md" style="left:1752px;top:765px">3000</span>
<span class="t md" style="left:1711px;top:771px">BetTO:</span><span class="t md" style="left:1752px;top:771px">10177.8499877792869</span>
<span class="t md" style="left:1711px;top:778px">SportbookTO:</span><span class="t md" style="left:1752px;top:778px">0 (0%)</span>
<span class="t md" style="left:1711px;top:784px">BetTO Time:</span><span class="t md" style="left:1752px;top:784px">2025-08-14 20:44:05</span>
<div class="hr" style="top:793px"></div>
<span class="t md" style="left:1650px;top:798px">Credit</span><span class="t md" style="left:1711px;top:798px">7788.578525</span>
<div class="hr" style="top:811px"></div>
<span class="t md" style="left:1650px;top:817px">Bank Account</span><span class="t md" style="left:1711px;top:817px">No</span>
<span class="t md" style="left:1650px;top:823px">Duplication</span>
<div class="hr" style="top:836px"></div>
<span class="t md" style="left:1650px;top:842px">Withdraw Limitation</span><span class="t md" style="left:1711px;top:842px">(0/3)</span>
<div class="hr" style="top:855px"></div>
<span class="t md" style="left:1650px;top:860px">New Member</span><span class="t md" style="left:1711px;top:860px">No</span>
<div class="hr" style="top:873px"></div>
<span class="t md" style="left:1650px;top:879px">First Withdraw</span><span class="t md" style="left:1711px;top:879px">No</span>
<div class="hr" style="top:892px"></div>
<span class="t md" style="left:1650px;top:897px">Last call</span>
<div class="hr" style="top:910px"></div>
<span class="t md" style="left:1782px;top:927px;color:#7aa7d8;font-weight:bold">RE-CHECK</span>
<span class="t md" style="left:1811px;top:927px;color:#888;font-weight:bold">CLOSE</span>
<span class="t" style="left:1770px;top:949px;color:#8aa6c0;font-size:17px">6:01 AM</span>
<svg class="a" style="left:1832px;top:995px;color:#888" width="24" height="24" viewBox="0 0 24 24"><circle class="i" cx="12" cy="12" r="11"/><circle cx="8" cy="9" r="1.400" fill="#888"/><circle cx="16" cy="9" r="1.400" fill="#888"/><path class="i" d="M7 15c2 3 8 3 10 0"/></svg>
<svg class="a" style="left:1884px;top:993px;color:#888" width="20" height="28" viewBox="0 0 20 28"><rect class="i" x="5" y="1" width="10" height="17" rx="5"/><path class="i" d="M1 13c0 11 18 11 18 0M10 22v5"/></svg>
<div class="a" style="left:1455px;top:1023px;width:190px;height:10px;background:linear-gradient(90deg,#777,#ddd)"></div>

<!-- front chrome -->
<div class="a" style="left:173px;top:42px;width:1468px;height:981px;background:#fff;border-radius:8px 8px 8px 8px;box-shadow:0 0 26px rgba(0,0,0,.4);overflow:hidden">
 <div class="a" style="left:0;top:0;width:1468px;height:39px;background:#0a1c38"></div>
 <div class="a" style="left:0;top:39px;width:1468px;height:81px;background:#1a3459"></div>
 <div class="a" style="left:0;top:120px;width:1468px;height:1px;background:#2c4a70"></div>
 <div class="a" style="left:0;top:121px;width:1468px;height:101px;background:#f9fbfd"></div>
 <div class="a" style="left:14px;top:178px;width:1438px;height:37px;background:#edf2fa;border-radius:18px"></div>
</div>
<div class="a" style="left:179px;top:47px;width:27px;height:28px;background:#1a3459;border-radius:14px"></div>
<svg class="a" style="left:187px;top:56px;color:#fff" width="12" height="10" viewBox="0 0 12 10"><path class="i" d="M2 2l4 4 4-4"/></svg>
<div class="a" style="left:561px;top:47px;width:53px;height:34px;background:#1a3459;border-radius:10px 10px 0 0"></div>

<svg class="a" style="left:220px;top:53px" width="16" height="16"><use href="#gc"/></svg><span class="t tb" style="left:245px;top:55px;width:11px;overflow:hidden">GC</span><div class="vs" style="left:268px;top:53px"></div>
<svg class="a" style="left:278px;top:53px" width="16" height="16"><use href="#gc"/></svg><span class="t tb" style="left:303px;top:55px;width:11px;overflow:hidden">GC</span><div class="vs" style="left:326px;top:53px"></div>
<svg class="a" style="left:336px;top:53px" width="16" height="16"><use href="#gc"/></svg><span class="t tb" style="left:361px;top:55px;width:11px;overflow:hidden">GC</span><div class="vs" style="left:384px;top:53px"></div>
<svg class="a" style="left:394px;top:53px" width="16" height="16"><use href="#gc"/></svg><span class="t tb" style="left:418px;top:55px;width:11px;overflow:hidden">GC</span><div class="vs" style="left:442px;top:53px"></div>
<svg class="a" style="left:452px;top:53px" width="16" height="16"><use href="#gc"/></svg><span class="t tb" style="left:476px;top:55px;width:11px;overflow:hidden">GC</span><div class="vs" style="left:500px;top:53px"></div>
<svg class="a" style="left:511px;top:53px" width="16" height="16"><use href="#gc"/></svg><span class="t tb" style="left:534px;top:55px;width:11px;overflow:hidden">GC</span>
<svg class="a" style="left:569px;top:53px" width="16" height="16"><use href="#gs"/></svg><svg class="a" style="left:592px;top:56px;color:#fff" width="11" height="11"><use href="#xx"/></svg>
<svg class="a" style="left:626px;top:53px" width="16" height="16"><use href="#gs"/></svg><span class="t tb" style="left:651px;top:55px;width:11px;overflow:hidden">MC</span><div class="vs" style="left:674px;top:53px"></div>
<svg class="a" style="left:685px;top:53px" width="16" height="16"><use href="#gc"/></svg><span class="t tb" style="left:709px;top:55px;width:11px;overflow:hidden">GC</span><div class="vs" style="left:732px;top:53px"></div>
<svg class="a" style="left:742px;top:53px" width="16" height="16"><use href="#gc"/></svg><span class="t tb" style="left:767px;top:55px;width:11px;overflow:hidden">GC</span><div class="vs" style="left:790px;top:53px"></div>
<svg class="a" style="left:800px;top:53px" width="16" height="16"><use href="#gc"/></svg><span class="t tb" style="left:824px;top:55px;width:11px;overflow:hidden">GC</span><div class="vs" style="left:848px;top:53px"></div>
<svg class="a" style="left:859px;top:53px" width="16" height="16"><use href="#gc"/></svg><span class="t tb" style="left:883px;top:55px;width:11px;overflow:hidden">GC</span><div class="vs" style="left:906px;top:53px"></div>
<svg class="a" style="left:915px;top:53px" width="16" height="16"><use href="#gc"/></svg><span class="t tb" style="left:940px;top:55px;width:11px;overflow:hidden">GC</span><div class="vs" style="left:961px;top:53px"></div>
<svg class="a" style="left:973px;top:53px" width="16" height="16"><use href="#gs"/></svg><span class="t tb" style="left:997px;top:55px;width:11px;overflow:hidden">Lo</span><div class="vs" style="left:1019px;top:53px"></div>
<div class="a" style="left:1030px;top:53px;width:16px;height:16px;border-radius:8px;background:#f58220"></div><div class="a" style="left:1034px;top:58px;width:8px;height:7px;background:#fbe3c8;border-radius:2px"></div><span class="t tb" style="left:1054px;top:55px;width:11px;overflow:hidden">Al</span><div class="vs" style="left:1076px;top:53px"></div>
<svg class="a" style="left:1087px;top:53px" width="16" height="16"><use href="#gl"/></svg><span class="t tb" style="left:1111px;top:55px;width:11px;overflow:hidden">Ad</span><div class="vs" style="left:1133px;top:53px"></div>
<svg class="a" style="left:1144px;top:53px" width="16" height="16"><use href="#gl"/></svg><span class="t tb" style="left:1168px;top:55px;width:11px;overflow:hidden">Ad</span><div class="vs" style="left:1190px;top:53px"></div>
<svg class="a" style="left:1200px;top:53px" width="16" height="16"><use href="#gm"/></svg><span class="t tb" style="left:1224px;top:55px;width:13px;overflow:hidden">Se</span><div class="vs" style="left:1247px;top:53px"></div>
<span class="t tb" style="left:1282px;top:55px;width:11px;overflow:hidden">Di</span><div class="vs" style="left:1304px;top:53px"></div>
<svg class="a" style="left:1315px;top:53px" width="16" height="16"><use href="#gm"/></svg><span class="t tb" style="left:1339px;top:55px;width:11px;overflow:hidden">Di</span><div class="vs" style="left:1361px;top:53px"></div>
<svg class="a" style="left:1372px;top:53px" width="16" height="16"><use href="#gm"/></svg><span class="t tb" style="left:1396px;top:55px;width:11px;overflow:hidden">Di</span><div class="vs" style="left:1418px;top:53px"></div>
<span class="t" style="left:1429px;top:52px;color:#fff;font-size:18px;font-weight:bold">+</span>
<div class="a" style="left:1519px;top:61px;width:12px;height:1.500px;background:#fff"></div>
<div class="a" style="left:1566px;top:55px;width:10px;height:13px;border:1.500px solid #fff"></div>
<svg class="a" style="left:1609px;top:54px;color:#fff" width="15" height="15"><use href="#xx"/></svg>

<svg class="a" style="left:187px;top:96px;color:#9eb0c8" width="16" height="16"><use href="#bk"/></svg>
<svg class="a" style="left:222px;top:96px;color:#5f769a" width="16" height="16"><use href="#fw"/></svg>
<svg class="a" style="left:259px;top:96px;color:#b7c3d4" width="16" height="16"><use href="#rl"/></svg>
<div class="a" style="left:294px;top:87px;width:1126px;height:34px;background:#202124;border-radius:17px"></div>
<div class="a" style="left:298px;top:92px;width:25px;height:25px;background:#1a3459;border-radius:13px"></div>
<svg class="a" style="left:302px;top:96px;color:#fff" width="16" height="16"><use href="#sl"/></svg>
<span class="t" id="url" style="left:331px;top:97px;color:#fff;font-size:14px;letter-spacing:-.1px">docs.google.com<span style="color:#a4a8ad">/spreadsheets/d/1BxhH68UFnEF4P4YylbUKfaW89gAWAlbek1BxC-6HsJA/edit?pli=1&amp;gid=587472134#gid=587472134</span></span>
<svg class="a" style="left:1356px;top:96px;color:#ccc" width="16" height="16"><use href="#zm"/></svg>
<svg class="a" style="left:1389px;top:96px;color:#ddd" width="16" height="16"><use href="#st"/></svg>
<svg class="a" style="left:1440px;top:96px" width="14" height="16" viewBox="0 0 14 16"><path fill="#e0245e" d="M7 0l7 2v6c0 4-3 6.500-7 8-4-1.500-7-4-7-8V2z"/><path d="M4.500 4v5a2.500 2.500 0 0 0 5 0V4" fill="none" stroke="#fff" stroke-width="1.400"/></svg>
<svg class="a" style="left:1475px;top:96px;color:#dfe5ee" width="16" height="16"><use href="#pz"/></svg>
<div class="a" style="left:1509px;top:96px;width:1px;height:16px;background:#0c1b34"></div>
<div class="a" style="left:1520px;top:87px;width:76px;height:34px;background:#0c1b34;border-radius:17px"></div>
<div class="a" style="left:1530px;top:94px;width:20px;height:20px;background:#5c6bc0;border-radius:10px"></div>
<span class="t" style="left:1535px;top:99px;color:#fff;font-size:10.500px">M</span>
<span class="t" style="left:1555px;top:98px;color:#fff;font-size:12px">Work</span>
<div class="a" style="left:1617px;top:98px;width:3px;height:3px;border-radius:2px;background:#fff"></div><div class="a" style="left:1617px;top:103px;width:3px;height:3px;border-radius:2px;background:#fff"></div><div class="a" style="left:1617px;top:108px;width:3px;height:3px;border-radius:2px;background:#fff"></div>

<svg class="a" style="left:185px;top:134px;color:#c9d4e3" width="16" height="16"><use href="#gr"/></svg>
<div class="a" style="left:215px;top:133px;width:1px;height:18px;background:#0c1b34"></div>
<svg class="a" style="left:233px;top:134px;color:#dfe5ee" width="16" height="16"><use href="#fd"/></svg><span class="t bm" style="left:257px;top:136px">OLA</span>
<svg class="a" style="left:298px;top:134px;color:#dfe5ee" width="16" height="16"><use href="#fd"/></svg><span class="t bm" style="left:322px;top:136px">ALO789</span>
<svg class="a" style="left:382px;top:134px;color:#dfe5ee" width="16" height="16"><use href="#fd"/></svg><span class="t bm" style="left:405px;top:136px">CA MONITORING</span>
<svg class="a" style="left:517px;top:134px;color:#dfe5ee" width="16" height="16"><use href="#fd"/></svg><span class="t bm" style="left:541px;top:136px">MARGA</span>
<svg class="a" style="left:601px;top:134px;color:#dfe5ee" width="16" height="16"><use href="#fd"/></svg><span class="t bm" style="left:625px;top:136px">TELE789</span>
<svg class="a" style="left:686px;top:134px;color:#dfe5ee" width="16" height="16"><use href="#fd"/></svg><span class="t bm" style="left:711px;top:136px;font-size:11px">AFFILIATE</span>
<svg class="a" style="left:784px;top:134px;color:#dfe5ee" width="16" height="16"><use href="#fd"/></svg><span class="t bm" style="left:808px;top:136px;font-size:11px">USDT CRYPTO</span>
<svg class="a" style="left:904px;top:134px;color:#dfe5ee" width="16" height="16"><use href="#fd"/></svg><span class="t bm" style="left:928px;top:136px;font-size:11px">EURO CUP 2024</span>
<svg class="a" style="left:1031px;top:134px;color:#dfe5ee" width="16" height="16"><use href="#fd"/></svg><span class="t bm" style="left:1056px;top:136px">CA</span>

<!-- sheets header -->
<svg class="a" style="left:193px;top:176px" width="22" height="31" viewBox="0 0 22 31"><path d="M2 0h14l6 6v23a2 2 0 0 1-2 2H2a2 2 0 0 1-2-2V2a2 2 0 0 1 2-2z" fill="#23a566"/><path d="M16 0l6 6h-6z" fill="#8ed1b1"/><path d="M5 13h12v10H5zM5 18h12M11 13v10" fill="none" stroke="#fff" stroke-width="1.600"/></svg>
<span class="t" id="ttl" style="left:228px;top:174px;color:#222;font-size:16px">Giao Mạng Tổng_Credit Agent_Tracking</span>
<span class="t" style="left:536px;top:177px;color:#555;font-size:12px">@</span>
<svg class="a" style="left:561px;top:175px;color:#555" width="16" height="16"><use href="#st"/></svg>
<svg class="a" style="left:590px;top:175px;color:#555" width="16" height="16" viewBox="0 0 16 16"><path class="i" d="M6 2h4l5 9-2 3H3l-2-3zM6 2L1 11M10 14l2-3"/></svg>
<svg class="a" style="left:619px;top:175px;color:#555" width="16" height="16" viewBox="0 0 16 16"><path class="i" d="M4 13a3.500 3.500 0 0 1 0-7 4.500 4.500 0 0 1 8.500-.5A3.800 3.800 0 0 1 12 13zM5.500 9.500l2 2 3-3.500"/></svg>
<span class="t mn" style="left:230px;top:197px">File</span>
<span class="t mn" style="left:264px;top:197px">Edit</span>
<span class="t mn" style="left:301px;top:197px">View</span>
<span class="t mn" style="left:343px;top:197px">Insert</span>
<span class="t mn" style="left:392px;top:197px">Format</span>
<span class="t mn" style="left:448px;top:197px">Data</span>
<span class="t mn" style="left:490px;top:197px">Tools</span>
<span class="t mn" style="left:536px;top:197px">Extensions</span>
<span class="t mn" style="left:614px;top:197px">Help</span>
<div class="a" style="left:1198px;top:175px;width:28px;height:28px;border-radius:14px;background:#0097a7;border:2px solid #c2185b"></div>
<span class="t" style="left:1208px;top:183px;color:#fff;font-size:13px">J</span>
<div class="a" style="left:1231px;top:175px;width:29px;height:28px;border-radius:14px;background:#d3e3fd"></div>
<svg class="a" style="left:1238px;top:181px" width="16" height="16" viewBox="0 0 16 16"><circle cx="6" cy="6" r="2.500" fill="#333"/><path d="M1 14c0-4 10-4 10 0z" fill="#333"/><rect x="8" y="1" width="8" height="5" rx="1.500" fill="#444"/></svg>
<svg class="a" style="left:1278px;top:180px;color:#333" width="18" height="18"><use href="#hs"/></svg>
<svg class="a" style="left:1323px;top:180px;color:#333" width="18" height="18" viewBox="0 0 16 16"><path class="i" d="M1.500 1.500h13v10h-13zM14.500 11.500v3l-3-3M4 4.500h8M4 7h8"/></svg>
<svg class="a" style="left:1371px;top:181px;color:#333" width="20" height="16" viewBox="0 0 20 16"><path class="i" d="M5 1h9v14H2V5zM14 6l4-3v10l-4-3"/></svg>
<svg class="a" style="left:1399px;top:185px;color:#444" width="8" height="8"><use href="#ar"/></svg>
<div class="a" style="left:1427px;top:171px;width:112px;height:36px;border-radius:18px;background:#c2e7ff"></div>
<div class="a" style="left:1509px;top:171px;width:1px;height:36px;background:#f3fbff"></div>
<svg class="a" style="left:1441px;top:182px;color:#123" width="16" height="14" viewBox="0 0 16 14"><circle class="i" cx="6" cy="4" r="2.800"/><path class="i" d="M1 13c0-3 2-4 5-4s5 1 5 4zM11 1.500a2.800 2.800 0 0 1 0 5M13 9c1.500.5 2.500 2 2.500 4"/></svg>
<span class="t" style="left:1466px;top:182px;color:#123;font-size:13px">Share</span>
<svg class="a" style="left:1520px;top:185px;color:#123" width="8" height="8"><use href="#ar"/></svg>
<svg class="a" style="left:1554px;top:179px" width="18" height="20" viewBox="0 0 18 20"><path d="M9 0c1 6 3 9 9 10-6 1-8 4-9 10-1-6-3-9-9-10 6-1 8-4 9-10z" fill="#333"/></svg>
<div class="a" style="left:1592px;top:175px;width:29px;height:28px;border-radius:14px;background:#5c6bc0"></div>
<span class="t" style="left:1601px;top:183px;color:#fff;font-size:13px">M</span>

<!-- sheets toolbar -->
<div class="a" style="left:195px;top:226px;width:90px;height:25px;background:#fff;border-radius:13px"></div>
<svg class="a" style="left:205px;top:231px;color:#444" width="15" height="15" viewBox="0 0 16 16"><circle class="i" cx="6.500" cy="6.500" r="4.500"/><path class="i" d="M10 10l5 5"/></svg>
<span class="t" style="left:228px;top:232px;color:#555;font-size:12.500px">Menus</span>
<svg class="a" style="left:294px;top:232px;color:#444" width="14" height="14" viewBox="0 0 16 16"><path class="i" d="M3 2v5h5M3 7c3-3 9-2 10 2 .4 2-.3 3.500-1.500 5"/></svg>
<svg class="a" style="left:322px;top:232px;color:#444" width="14" height="14" viewBox="0 0 16 16"><path class="i" d="M13 2v5H8M13 7C10 4 4 5 3 9c-.4 2 .3 3.500 1.500 5"/></svg>
<svg class="a" style="left:351px;top:232px;color:#444" width="14" height="14" viewBox="0 0 16 16"><path class="i" d="M4 5V1.500h8V5M4 11H1.500V5h13v6H12M4 9h8v5.500H4z"/></svg>
<svg class="a" style="left:380px;top:231px;color:#444" width="14" height="16" viewBox="0 0 14 16"><path class="i" d="M1 1.500h9v4H1zM10 3.500h3v4H6v3M5 10.500h2v5H5z"/></svg>
<span class="t tl" style="left:410px;top:232px;font-size:13px">100%</span>
<svg class="a" style="left:455px;top:235px;color:#444" width="8" height="8"><use href="#ar"/></svg>
<div class="sep" style="left:475px;top:229px;height:18px"></div>
<span class="t tl" style="left:489px;top:232px;font-weight:bold">$</span>
<span class="t tl" style="left:516px;top:232px">%</span>
<span class="t tl" style="left:543px;top:230px;font-size:10px;font-weight:bold">.0</span><span class="t tl" style="left:550px;top:242px;font-size:9px">←</span>
<span class="t tl" style="left:571px;top:230px;font-size:10px;font-weight:bold">.00</span><span class="t tl" style="left:579px;top:242px;font-size:9px">→</span>
<span class="t tl" style="left:601px;top:233px;font-size:10.500px">123</span>
<div class="sep" style="left:628px;top:229px;height:18px"></div>
<span class="t tl" style="left:642px;top:232px;font-size:13px">Roboto</span>
<svg class="a" style="left:702px;top:235px;color:#444" width="8" height="8"><use href="#ar"/></svg>
<div class="sep" style="left:724px;top:229px;height:18px"></div>
<div class="a" style="left:733px;top:238px;width:10px;height:1.500px;background:#444"></div>
<div class="a" style="left:752px;top:228px;width:31px;height:21px;border:1px solid #555;border-radius:4px"></div>
<span class="t tl" style="left:763px;top:233px;color:#222">11</span>
<span class="t" style="left:790px;top:230px;color:#444;font-size:17px">+</span>
<div class="sep" style="left:811px;top:229px;height:18px"></div>
<div class="a" style="left:815px;top:225px;width:27px;height:27px;background:#d3e3fd;border-radius:4px"></div>
<span class="t" style="left:824px;top:232px;color:#0b2f66;font-size:13.500px;font-weight:bold">B</span>
<span class="t" style="left:855px;top:231px;color:#444;font-size:14.500px;font-style:italic;font-family:'Liberation Serif',serif">I</span>
<svg class="a" style="left:880px;top:231px;color:#444" width="14" height="14" viewBox="0 0 14 14"><path class="i" d="M1 7h12M10 3c-1-2-6-2-6 1M4 11c1 2 6 2 6-1"/></svg>
<span class="t" style="left:912px;top:231px;color:#333;font-size:12px">A</span>
<div class="a" style="left:907px;top:244px;width:20px;height:2px;background:#222"></div>
<div class="sep" style="left:936px;top:229px;height:18px"></div>
<svg class="a" style="left:944px;top:230px;color:#333" width="16" height="14" viewBox="0 0 16 14"><path d="M6 1l6 6-5 5-6-5zM13 8c1 2 2 3 1.500 4-1 1-2-.500-1.500-4z" fill="#333"/></svg>
<div class="a" style="left:943px;top:245px;width:20px;height:2px;background:#fff"></div>
<svg class="a" style="left:977px;top:231px;color:#444" width="14" height="14" viewBox="0 0 14 14"><path class="i" d="M1 1h12v12H1zM7 1v12M1 7h12"/></svg>
<svg class="a" style="left:1007px;top:231px;color:#aaa" width="14" height="14" viewBox="0 0 14 14"><path class="i" stroke-dasharray="2 1.500" d="M1 1h12v12H1zM7 1v12M1 7h12"/></svg>
<svg class="a" style="left:1029px;top:235px;color:#bbb" width="8" height="8"><use href="#ar"/></svg>
<div class="sep" style="left:1042px;top:229px;height:18px"></div>
<svg class="a" style="left:1051px;top:231px;color:#444" width="14" height="14" viewBox="0 0 14 14"><path class="i" d="M0 1h14M3 5h11M0 9h14M3 13h11"/></svg><svg class="a" style="left:1071px;top:235px;color:#444" width="8" height="8"><use href="#ar"/></svg>
<svg class="a" style="left:1088px;top:231px;color:#444" width="14" height="14" viewBox="0 0 14 14"><path class="i" d="M7 0v9M3 6l4 4 4-4M1 13h12"/></svg><svg class="a" style="left:1108px;top:235px;color:#444" width="8" height="8"><use href="#ar"/></svg>
<svg class="a" style="left:1125px;top:231px;color:#444" width="14" height="14" viewBox="0 0 14 14"><path class="i" d="M1 0v14M13 0v14M4 7h6M7 4l3 3-3 3"/></svg><svg class="a" style="left:1145px;top:235px;color:#444" width="8" height="8"><use href="#ar"/></svg>
<svg class="a" style="left:1163px;top:230px;color:#444" width="14" height="16" viewBox="0 0 14 16"><path class="i" d="M3 10l4-9 4 9M4.500 7h5M1 14h12"/></svg><svg class="a" style="left:1182px;top:235px;color:#444" width="8" height="8"><use href="#ar"/></svg>
<div class="sep" style="left:1197px;top:229px;height:18px"></div>
<svg class="a" style="left:1208px;top:232px;color:#444" width="14" height="12" viewBox="0 0 14 12"><path class="i" d="M6 2H4a4 4 0 0 0 0 8h2M8 2h2a4 4 0 0 1 0 8H8M4 6h6"/></svg>
<svg class="a" style="left:1236px;top:230px;color:#444" width="14" height="16" viewBox="0 0 14 16"><path class="i" d="M1 1h12v11H4l-3 3zM7 3.500v6M4 6.500h6"/></svg>
<svg class="a" style="left:1266px;top:231px;color:#444" width="14" height="14" viewBox="0 0 14 14"><path class="i" d="M1 1h12v12H1zM4 10V7M7 10V4M10 10V8"/></svg>
<div class="a" style="left:1288px;top:225px;width:28px;height:27px;background:#d3e3fd;border-radius:4px"></div>
<svg class="a" style="left:1295px;top:232px" width="14" height="14" viewBox="0 0 14 14"><path d="M0 1h14L9 7v7H5V7z" fill="#0b2f66"/></svg>
<svg class="a" style="left:1321px;top:231px;color:#444" width="14" height="16" viewBox="0 0 14 16"><path class="i" d="M1 1h12v14H1zM1 5h12M1 9h12M5 5v10M9 5v10"/></svg><svg class="a" style="left:1341px;top:235px;color:#444" width="8" height="8"><use href="#ar"/></svg>
<svg class="a" style="left:1364px;top:231px;color:#444" width="10" height="14" viewBox="0 0 10 14"><path class="i" d="M9 1H1l4 6-4 6h8"/></svg>
<svg class="a" style="left:1595px;top:235px;color:#444" width="10" height="8" viewBox="0 0 10 8"><path class="i" d="M1 6l4-4 4 4"/></svg>

<!-- formula bar -->
<span class="t" style="left:185px;top:271px;color:#333;font-size:11px">A1</span>
<svg class="a" style="left:250px;top:273px;color:#555" width="7" height="7"><use href="#ar"/></svg>
<span class="t" style="left:280px;top:271px;color:#999;font-size:12px;font-style:italic;font-family:'Liberation Serif',serif">fx</span>
<div class="a" style="left:1481px;top:264px;width:144px;height:22px;background:#f0f4f9;border-radius:11px"></div>
<svg class="a" style="left:1489px;top:270px" width="10" height="11" viewBox="0 0 18 20"><path d="M9 0c1 6 3 9 9 10-6 1-8 4-9 10-1-6-3-9-9-10 6-1 8-4 9-10z" fill="#222"/></svg>
<span class="t" style="left:1505px;top:269px;color:#333;font-size:11px">Summarize this table</span>
<div class="a" style="left:173px;top:288px;width:1468px;height:1px;background:#c7c7c7"></div>

<!-- sheet table -->
<table id="T">
<colgroup><col style="width:40px"><col style="width:44px"><col style="width:73px"><col style="width:111px"><col style="width:104px"><col style="width:104px"><col style="width:101px"><col style="width:57px"><col style="width:114px"><col style="width:85px"><col style="width:114px"><col style="width:124px"><col style="width:114px"><col style="width:140px"><col style="width:131px"></colgroup>
<tr class="L" style="height:23px"><th style="background:#f8f9fa;border-right:3px solid #c4c4c4;border-bottom:3px solid #c4c4c4"></th><td style="background:#c0e8cc">A</td><td>B</td><td>C</td><td>D</td><td>E</td><td>F</td><td>G</td><td>H</td><td>I</td><td>J</td><td>K</td><td>L</td><td>M</td><td></td></tr>
<tr class="H" style="height:61px"><th style="background:#d3e3fd;font-weight:bold">1</th><td style="background:#fff;box-shadow:inset 0 0 0 2px #0b57d0;border-right:0"></td><td style="background:#fff"></td><td>User ID</td><td>Status</td><td>Package</td><td>Price</td><td>Credit</td><td>Coverage</td><td style="color:#0a2236">User ID</td><td>Current WinLoss</td><td>Partial Settlement</td><td>Final Settlement</td><td style="color:#e8f000">W/L %<br>Inform CS on 50%, 70%<br>and near 100%</td><td class="n"></td></tr>
<tr style="height:5px;line-height:0;font-size:0"><td colspan="15" style="background:#c4c4c4;border:0;padding:0"></td></tr>
<tr style="height:18px"><th>2</th><td></td><td class="g">DZ54BG</td><td>RQA800CM</td><td><b class="p te">Terminate</b></td><td><b class="p bm1">BMA100</b></td><td class="f">8,500</td><td>7,000</td><td class="d" style="background:#f1c232">01/27/25 -NOW</td><td class="r1">RQA800CM</td><td class="Z">0.00</td><td></td><td class="Z">0.00</td><td class="Ng">0.00%</td><td class="n">NEW BAG100</td></tr>
<tr style="height:19px"><th>3</th><td>2</td><td class="g">3BQB3U</td><td>RQA8D1</td><td><b class="p te">Terminate</b></td><td><b class="p bm1">BMA100</b></td><td>6000</td><td>3,000</td><td class="d" style="background:#c27ba0">01/20/25 -NOW</td><td class="r1">RQA8D1</td><td class="G">54.61</td><td></td><td></td><td class="Ng">1.82%</td><td class="n"></td></tr>
<tr style="height:17px"><th>4</th><td>3</td><td class="g">GA81AL</td><td style="color:#111">RQA800BE</td><td><b class="p su">Suspended</b></td><td class="f"><b class="p ba">BAG100</b></td><td class="f">8,500</td><td>2,000</td><td class="d" style="background:#c27ba0">01/20/25 -NOW</td><td class="r1">RQA800BE</td><td class="J">(1,932.47)</td><td class="J">(2,162.89)</td><td class="J">(4,095.36)</td><td style="background:#f00;color:#fff;font-weight:bold">-204.77%</td><td class="n ye" style="font-size:14px;line-height:16px"><div style="height:16px;padding-top:4px;overflow:hidden">HOLD SETTLEMENT</div></td></tr>
<tr style="height:22px"><th>5</th><td>4</td><td class="g">3EQ2ZJ</td><td style="color:#111">RQA800BN</td><td><b class="p te">Terminate</b></td><td class="f"><b class="p ba">BAG100</b></td><td class="f">8,500</td><td>2,000</td><td class="d" style="background:#9900ff">02/10/25 -NOW</td><td class="r1">RQA800BN</td><td class="J">(2,295.52)</td><td class="G f">1,543.18</td><td class="J">(752.34)</td><td class="M">-37.62%</td><td class="n" style="vertical-align:top">2YYM76N&nbsp; Partial settlement</td></tr>
<tr style="height:19px"><th>6</th><td>5</td><td class="g">9MVELR</td><td style="color:#111">RQA800AW</td><td><b class="p te">Terminate</b></td><td class="f"><b class="p ba">BAG100</b></td><td class="f">8,500</td><td>2,000</td><td class="d" style="background:#f99b7a">02/17/25 -NOW</td><td class="r2">RQA800AW</td><td class="Ng">0.00</td><td class="J">(312.72)</td><td class="J">(312.72)</td><td class="M">-15.64%</td><td class="n mg">partial value due to adjust</td></tr>
<tr style="height:19px"><th>7</th><td>6</td><td class="g f">YM73QA</td><td style="color:#111">RQA8GA</td><td><b class="p te">Terminate</b></td><td class="b5c"><b class="p b5">BMA50</b></td><td>8,000</td><td>10,000</td><td class="d" style="background:#ad2f6e">04/21/25 -NOW</td><td class="r2">RQA8GA</td><td class="G">308.19</td><td></td><td></td><td class="Ng">3.08%</td><td class="n">terminate 04/21/2025&nbsp; IA4</td></tr>
<tr style="height:18px"><th>8</th><td>7</td><td class="g">YM73QA</td><td style="color:#111">RQA8EM</td><td><b class="p te">Terminate</b></td><td class="b5c"><b class="p b5">BMA50</b></td><td class="f">8,000</td><td>15,000</td><td class="d" style="background:#ad2f6e">04/21/25 -NOW</td><td class="r3">RQA8EM</td><td class="Z">0.00</td><td></td><td></td><td class="Ng">0.00%</td><td class="n mg">partial value due to adjust</td></tr>
<tr style="height:16px"><th>9</th><td>8</td><td class="g">9ADS25</td><td style="color:#111">RQA800AR</td><td><b class="p te">Terminate</b></td><td class="f"><b class="p ba">BAG100</b></td><td class="f">8,500</td><td>2,000</td><td class="d" style="background:#135f6b">04/28/25 -NOW</td><td class="r2">RQA800AR</td><td class="Z">0.00</td><td></td><td class="M">fumz630032</td><td class="Ng">#VALUE!</td><td class="n mg"></td></tr>
<tr style="height:18px"><th>10</th><td>9</td><td class="g">AWGUTQ</td><td style="color:#111">RQA8G8</td><td><b class="p te">Terminate</b></td><td><b class="p bm1">BMA100</b></td><td class="f">6,500</td><td>5,000</td><td class="d" style="background:#ad2f6e">04/21/25 -NOW</td><td class="r2">RQA8G8</td><td class="J">(3,710.16)</td><td></td><td></td><td class="M">-74.20%</td><td class="n"></td></tr>
<tr style="height:18px"><th>11</th><td>10</td><td class="g">UNV7UH</td><td style="color:#111">RQA800BM</td><td><b class="p su">Suspended</b></td><td class="f"><b class="p ba">BAG100</b></td><td class="f">8,500</td><td>2,000</td><td class="d" style="background:#135f6b">04/28/25 -NOW</td><td class="r3">RQA800BM</td><td class="J">(8,590.82)</td><td class="J" style="font-size:13px">(4,698.20)</td><td class="J">(13,289.02)</td><td class="M">-664.45%</td><td class="n f"></td></tr>
<tr style="height:19px"><th>12</th><td>11</td><td class="g f">7AR7NG</td><td style="color:#111">RQA800BQ</td><td><b class="p te">Terminate</b></td><td class="f"><b class="p ba">BAG100</b></td><td class="f">8,500</td><td>2,000</td><td class="d" style="background:#6d9eeb">05/05/25 -NOW</td><td class="r2">RQA800BQ</td><td class="J">(49.65)</td><td></td><td></td><td class="M">-2.48%</td><td class="n"></td></tr>
<tr style="height:19px"><th>13</th><td>12</td><td class="g f">DZ54BG</td><td style="color:#111">RQA800BP</td><td><b class="p te">Terminate</b></td><td class="f"><b class="p ba">BAG100</b></td><td class="f">8,500</td><td>2,000</td><td class="d" style="background:#6d9eeb">05/05/25 -NOW</td><td class="r3">RQA800BP</td><td class="J">(2,367.70)</td><td></td><td></td><td class="M">-118.39%</td><td class="n ye">Partial settlement via MOMO</td></tr>
<tr style="height:19px"><th>14</th><td>13</td><td class="g">TANSFW</td><td style="color:#111">RQA8CN</td><td><b class="p te">Terminate</b></td><td><b class="p bm1">BMA100</b></td><td class="f">6,000</td><td>7,000</td><td class="d" style="background:#ad2f6e">04/21/25 -NOW</td><td class="r3">RQA8CN</td><td class="Z">0.00</td><td class="J">(651.58)</td><td class="J">(651.58)</td><td class="M">-9.31%</td><td class="n mg">partial value due to adjust</td></tr>
<tr style="height:20px"><th>15</th><td>14</td><td class="g">QT1UQZ</td><td style="color:#111">RQA8G7</td><td><b class="p te">Terminate</b></td><td><b class="p bm1">BMA100</b></td><td class="f">6,500</td><td>10,000</td><td class="d" style="background:#351c75">05/19/25 -NOW</td><td class="r2">RQA8G7</td><td class="G">143.28</td><td></td><td></td><td class="Ng">1.43%</td><td class="n f"></td></tr>
<tr style="height:20px"><th>16</th><td>15</td><td class="g f">DZ54BG</td><td style="color:#111">RQA800BR</td><td><b class="p te">Terminate</b></td><td class="f"><b class="p ba">BAG100</b></td><td class="f">8,500</td><td>2,000</td><td class="d" style="background:#93c47d">06/02/25 -NOW</td><td style="color:#111">RQA800BR</td><td class="J">(897.23)</td><td></td><td></td><td class="M">-44.86%</td><td class="n"></td></tr>
<tr style="height:20px"><th>17</th><td>16</td><td class="g">16SM0V</td><td style="color:#111">RQA8G3</td><td><b class="p su">Suspended</b></td><td><b class="p bm1">BMA100</b></td><td class="f">6,500</td><td style="color:#f00">8,938</td><td class="d" style="background:#b86ee0">05/26/25 -NOW</td><td class="r3">RQA8G3</td><td class="J">(5,006.14)</td><td></td><td></td><td class="M" style="font-weight:bold">-56.01%</td><td class="n" style="background:#ff0;color:#e00;font-size:11px">USDT 15J2ZY , Hold&nbsp; Settlement</td></tr>
<tr style="height:18px"><th>18</th><td>18</td><td class="g">H2FA2B</td><td style="color:#111">RQA8G4</td><td><b class="p te">Terminate</b></td><td><b class="p bm1">BMA100</b></td><td>6,500</td><td>5000</td><td class="d" style="background:#b86ee0">05/26/25 -NOW</td><td class="r3">RQA8G4</td><td class="Z">0.00</td><td class="G">9.43</td><td class="G">9.43</td><td class="Ng">0.19%</td><td class="n" style="background:#f0f;color:#fff;font-size:11px">FF084833/partial value due</td></tr>
<tr style="height:18px"><th>19</th><td>31</td><td class="g f">AWGUTQ</td><td style="color:#111">RQA800BS</td><td><b class="p tq">Terminat...</b></td><td class="f"><b class="p ba">BAG100</b></td><td class="f">8,500</td><td class="f">2,000</td><td class="d" style="background:#ff5a52">06/23/25 - NOW</td><td class="r2">RQA800BS</td><td class="J">(1,556.12)</td><td></td><td></td><td class="M Y" style="font-weight:bold">-77.81%</td><td class="n">terminate&nbsp;&nbsp; IA4KX8</td></tr>
<tr style="height:18px"><th>20</th><td>42</td><td class="g">C2S7FK</td><td class="r3">RQA800BV</td><td><b class="p su">Suspended</b></td><td class="f"><b class="p ba">BAG100</b></td><td class="f">8,500</td><td class="f">2000</td><td class="d" style="background:#38761d">06/30/25 - NOW</td><td class="r3">RQA800BV</td><td class="J">(1,998.58)</td><td></td><td></td><td class="M" style="font-weight:bold">-99.93%</td><td class="n"></td></tr>
<tr style="height:19px"><th>21</th><td>40</td><td class="g">FXXZ78</td><td style="color:#111">RQA800B8</td><td><b class="p su">Suspended</b></td><td class="f"><b class="p ba">BAG100</b></td><td class="f">8,500</td><td>2,000</td><td class="d" style="background:#f99b7a">07/21/25 - NOW</td><td class="r2">RQA800B8</td><td class="J">(1,993.44)</td><td></td><td></td><td class="M Y" style="font-weight:bold">-99.67%</td><td class="n"></td></tr>
<tr style="height:18px"><th>22</th><td>30</td><td class="g">6JYUVK</td><td style="color:#111">RQA8GC</td><td><b class="p te">Terminate</b></td><td><b class="p bm1">BMA100</b></td><td class="f">6,500</td><td>20,000</td><td class="d" style="background:#9900ff">07/14/25 - NOW</td><td class="r3">RQA8GC</td><td class="Z">0.00</td><td></td><td></td><td class="Ng">0.00%</td><td class="n"></td></tr>
<tr style="height:20px"><th>23</th><td>32</td><td class="g bl">BCUF3V</td><td style="color:#111">RQA800BU</td><td><b class="p te">Terminate</b></td><td class="f"><b class="p ba">BAG100</b></td><td class="f">8,500</td><td>2,000</td><td class="d" style="background:#9900ff">07/14/25 - NOW</td><td class="r3">RQA800BU</td><td class="J">(2,826.68)</td><td class="G">1,700.00</td><td class="J">(1,126.68)</td><td class="M Y" style="font-weight:bold">-56.33%</td><td class="n" style="color:#000;font-weight:bold;font-size:12px">terminate&nbsp; 7GBVMP</td></tr>
<tr style="height:19px"><th>24</th><td>23</td><td class="g">MARKLW</td><td style="color:#111">RQA800B7</td><td><b class="p op">Open</b></td><td class="f"><b class="p ba">BAG100</b></td><td class="f">8,500</td><td>2,000</td><td class="d" style="background:#f99b7a">07/21/25 - NOW</td><td class="g">RQA800B7</td><td class="J">(350.64)</td><td class="f"></td><td></td><td class="M" style="font-weight:bold">-17.53%</td><td class="n f"></td></tr>
<tr style="height:20px"><th>25</th><td></td><td class="g">WX1LFV</td><td class="g">RQA800BW</td><td><b class="p op">Open</b></td><td class="f"><b class="p ba">BAG100</b></td><td class="f">8,500</td><td>2,000</td><td class="d" style="background:#f99b7a">07/21/25 - NOW</td><td class="g">RQA800BW</td><td class="G">5.51</td><td></td><td></td><td class="Ng">0.28%</td><td class="n f"></td></tr>
<tr style="height:18px"><th>26</th><td>37</td><td class="g">9ADS25</td><td style="color:#111">RQA8GD</td><td><b class="p op">Open</b></td><td><b class="p bm1">BMA100</b></td><td class="f">6,500</td><td>5,000</td><td class="d" style="background:#f99b7a">07/21/25 - NOW</td><td class="g">RQA8GD</td><td class="G">1,574.93</td><td class="J">(2,429.80)</td><td class="J">(854.87)</td><td class="M" style="font-weight:bold">-17.10%</td><td class="n" style="background:#f0f;color:#fff;font-size:13px">partial value due to adjust</td></tr>
<tr style="height:19px"><th>27</th><td>19</td><td class="g">EQL8ZB</td><td style="color:#111">RQA800AQ</td><td><b class="p op">Open</b></td><td class="f"><b class="p ba">BAG100</b></td><td class="f">8,500</td><td>2,000</td><td class="d" style="background:#45818e">07/28/25 - NOW</td><td class="g">RQA800AQ</td><td class="J">0.00</td><td class="J">(828.60)</td><td class="J">(828.60)</td><td class="M" style="font-weight:bold">-41.43%</td><td class="n mg">partial value due to adjust</td></tr>
<tr style="height:18px"><th>28</th><td>41</td><td class="g bl">X4LKSL</td><td style="color:#111">RQA800BK</td><td><b class="p op">Open</b></td><td class="f"><b class="p ba">BAG100</b></td><td class="f">8,500</td><td>2,000</td><td class="d" style="background:#45818e">07/28/25 - NOW</td><td class="g">RQA800BK</td><td class="G">0.00</td><td></td><td></td><td class="G">0.00%</td><td class="n"></td></tr>
<tr style="height:19px"><th>29</th><td>20</td><td class="g">YM73QA</td><td style="color:#111">RQA8GB</td><td><b class="p op">Open</b></td><td class="b5c"><b class="p b5">BMA50</b></td><td class="f">8,500</td><td>20,000</td><td class="d" style="background:#45818e">07/28/25 - NOW</td><td style="color:#111">RQA8GB</td><td class="J">0.00</td><td class="J" style="font-size:13px">-1542.95</td><td class="J">(1,542.95)</td><td class="M" style="font-weight:bold">-7.71%</td><td class="n ye" style="font-style:italic;font-size:12px">[Compliance Team Suggestion</td></tr>
<tr style="height:19px"><th>30</th><td>33</td><td class="g">0SLJUC</td><td style="color:#111">RQA8DT</td><td><b class="p op">Open</b></td><td><b class="p bm1">BMA100</b></td><td class="f">6,000</td><td>5,000</td><td class="d" style="background:#45818e">07/28/25 - NOW</td><td class="g">RQA8DT</td><td class="J">(7.10)</td><td></td><td></td><td class="M" style="font-weight:bold">-0.14%</td><td class="n f"></td></tr>
<tr style="height:18px"><th>31</th><td>21</td><td class="g">L16JWS</td><td style="color:#111">RQA80063</td><td><b class="p op">Open</b></td><td class="f"><b class="p ba">BAG100</b></td><td class="f">8,000</td><td>1,000</td><td class="d" style="background:#741b47">08/04/25 - NOW</td><td style="color:#111">RQA80063</td><td class="J">0.00</td><td class="J">(469.36)</td><td class="J">(469.36)</td><td class="M" style="font-weight:bold">-46.94%</td><td class="n mg">partial value due to adjust</td></tr>
<tr style="height:18px"><th>32</th><td>17</td><td class="g">LNSH6K</td><td style="color:#111">RQA800A2</td><td><b class="p op">Open</b></td><td class="f"><b class="p ba">BAG100</b></td><td class="f">8,000</td><td>2,000</td><td class="d" style="background:#741b47">08/04/25 - NOW</td><td class="g">RQA800A2</td><td class="J">(127.54)</td><td></td><td></td><td class="M" style="font-weight:bold">-6.38%</td><td class="n"></td></tr>
<tr style="height:19px"><th>33</th><td>22</td><td class="g">RKE2KF</td><td style="color:#111">RQA800B2</td><td><b class="p op">Open</b></td><td class="f"><b class="p ba">BAG100</b></td><td class="f">8,500</td><td>2,000</td><td class="d" style="background:#741b47">08/04/25 - NOW</td><td style="color:#111">RQA800B2</td><td class="J">(63.78)</td><td></td><td></td><td class="M" style="font-weight:bold">-3.19%</td><td class="n"></td></tr>
</table>
<div class="a" style="left:254px;top:371px;width:7px;height:7px;border-radius:4px;background:#0b57d0"></div>
<div class="a" style="left:1495px;top:514px;width:0;height:0;border-top:5px solid #d33;border-left:5px solid transparent"></div>
<div class="a" style="left:1629px;top:289px;width:12px;height:701px;background:#fff;border-left:1px solid #e4e4e4"></div>
<div class="a" style="left:1630px;top:378px;width:8px;height:90px;background:#dadce0;border-radius:4px"></div>
<span class="t" style="left:1632px;top:954px;color:#aaa;font-size:6px">▲</span>
<span class="t" style="left:1632px;top:968px;color:#aaa;font-size:6px">▼</span>
<div class="a" style="left:173px;top:977px;width:1468px;height:13px;background:#fff"></div>
<div class="a" style="left:216px;top:979px;width:607px;height:8px;background:#d5d8dc;border-radius:4px"></div>
<span class="t" style="left:1605px;top:979px;color:#aaa;font-size:6px">◀</span>
<span class="t" style="left:1620px;top:979px;color:#aaa;font-size:6px">▶</span>
<div class="a" style="left:173px;top:990px;width:1468px;height:33px;background:#f9fbfd;border-top:1px solid #ddd;border-radius:0 0 8px 8px"></div>
<span class="t" style="left:222px;top:997px;color:#444;font-size:18px">+</span>
<svg class="a" style="left:257px;top:1003px;color:#444" width="14" height="10" viewBox="0 0 14 10"><path class="i" d="M0 1h14M0 5h14M0 9h14"/></svg>
<div class="a" style="left:294px;top:1020px;width:110px;height:3px;background:#f00"></div>
<span class="t" style="left:305px;top:1001px;color:#444;font-size:13px;letter-spacing:.3px">NEW Policy</span>
<svg class="a" style="left:385px;top:1005px;color:#444" width="8" height="8"><use href="#ar"/></svg>
<span class="t" style="left:416px;top:1001px;color:#444;font-size:13px;letter-spacing:.35px">Giao mạng Tổng</span>
<svg class="a" style="left:527px;top:1005px;color:#444" width="8" height="8"><use href="#ar"/></svg>
<div class="a" style="left:546px;top:991px;width:152px;height:32px;background:#e1e9f7"></div>
<div class="a" style="left:547px;top:1020px;width:151px;height:3px;background:#0f0"></div>
<span class="t" style="left:557px;top:1001px;color:#0b57d0;font-size:13px;font-weight:bold">Monitoring - NEW</span>
<svg class="a" style="left:680px;top:1005px;color:#0b57d0" width="8" height="8"><use href="#ar"/></svg>
<span class="t" style="left:710px;top:1001px;color:#444;font-size:13px;letter-spacing:.6px">Terminate Contract</span>
<svg class="a" style="left:840px;top:1005px;color:#444" width="8" height="8"><use href="#ar"/></svg>
<div class="a" style="left:860px;top:1020px;width:66px;height:3px;background:#f00"></div>
<span class="t" style="left:871px;top:1001px;color:#444;font-size:13px">SOP</span>
<svg class="a" style="left:907px;top:1005px;color:#444" width="8" height="8"><use href="#ar"/></svg>
<div class="a" style="left:926px;top:1020px;width:103px;height:3px;background:#ff0"></div>
<span class="t" style="left:937px;top:1001px;color:#444;font-size:13px;letter-spacing:.7px">Agent List</span>
<svg class="a" style="left:1010px;top:1005px;color:#444" width="8" height="8"><use href="#ar"/></svg>
<span class="t" style="left:1041px;top:1001px;color:#444;font-size:13px;letter-spacing:.6px">Monitoring - OLD</span>
<svg class="a" style="left:1159px;top:1005px;color:#444" width="8" height="8"><use href="#ar"/></svg>
<span class="t" style="left:1189px;top:1001px;color:#444;font-size:13px;letter-spacing:.6px">CA 2.0</span>
<svg class="a" style="left:1241px;top:1005px;color:#444" width="8" height="8"><use href="#ar"/></svg>
<svg class="a" style="left:1611px;top:1002px;color:#444" width="8" height="12" viewBox="0 0 8 12"><path class="i" d="M6 1L2 6l4 5"/></svg>

<!-- taskbar -->
<div class="a" style="left:0;top:1032px;width:1915px;height:36px;background:#dadada"></div>
<svg class="a" style="left:551px;top:1045px" width="24" height="23" viewBox="0 0 24 23"><path d="M0 0h11v11H0zM13 0h11v11H13zM0 13h11v10H0zM13 13h11v10H13z" fill="#1a9fe8"/></svg>
<div class="a" style="left:588px;top:1041px;width:217px;height:30px;background:#f7f7f7;border-radius:15px"></div>
<svg class="a" style="left:599px;top:1049px;color:#333" width="15" height="16" viewBox="0 0 16 16"><circle class="i" cx="6.500" cy="6.500" r="5.500"/><path class="i" d="M10.500 11l4 4.500"/></svg>
<span class="t" style="left:624px;top:1050px;color:#555;font-size:13px">Search</span>
<svg class="a" style="left:756px;top:1042px" width="46" height="26" viewBox="0 0 46 26"><rect x="4" y="12" width="6" height="12" fill="#f3e4c3"/><rect x="12" y="14" width="7" height="10" fill="#e9d3a8"/><path d="M7 12V8" stroke="#e67e22" stroke-width="1.500"/><ellipse cx="30" cy="6" rx="6" ry="4" fill="#b7a998"/><ellipse cx="29" cy="13" rx="9" ry="4.500" fill="#3e3a37"/><ellipse cx="29" cy="20" rx="11" ry="5" fill="#c8c4bd"/><ellipse cx="28" cy="25" rx="15" ry="3" fill="#555"/></svg>
<svg class="a" style="left:820px;top:1046px" width="20" height="22" viewBox="0 0 20 22"><path d="M0 1h8l2 3h10v18H0z" fill="#f5c542"/><rect x="6" y="14" width="8" height="5" fill="#1d7fd1"/></svg>
<svg class="a" style="left:863px;top:1044px" width="24" height="24" viewBox="0 0 24 24"><circle cx="12" cy="12" r="12" fill="#1d8ed8"/><path d="M6 13c0-6 11-9 14-3 1 2-2 3-6 3-3 0-3 4 1 5 3 1 5 0 7-1-2 5-8 7-11 5-3-2-5-5-5-9z" fill="#3ecf8e"/><circle cx="15" cy="9" r="3" fill="#fff" opacity=".8"/></svg>
<svg class="a" style="left:908px;top:1044px" width="24" height="24" viewBox="0 0 24 24"><circle cx="12" cy="12" r="12" fill="#34a853"/><path d="M12 0a12 12 0 0 1 10.400 6H12a6 6 0 0 0-5.200 3L2 3a12 12 0 0 1 10-3z" fill="#ea4335"/><path d="M22.400 6A12 12 0 0 1 12 24l5.200-9A6 6 0 0 0 16 8z" fill="#fbbc04"/><circle cx="12" cy="12" r="5.500" fill="#fff"/><circle cx="12" cy="12" r="4.300" fill="#4285f4"/></svg>
<svg class="a" style="left:951px;top:1044px" width="24" height="24" viewBox="0 0 24 24"><circle cx="12" cy="13" r="11" fill="#ff7139"/><path d="M12 2c4 3 2 5 0 6s-5 3-3 7 8 3 8-2c3 5-2 9-6 9-5 0-9-5-7-10z" fill="#ffb02e"/><circle cx="12" cy="12" r="5" fill="#7b2fd1"/></svg>
<svg class="a" style="left:1000px;top:1044px" width="24" height="24" viewBox="0 0 24 24"><path d="M8 6V2h8v4" fill="none" stroke="#2b8dd6" stroke-width="2"/><path d="M2 6h20v18H2z" fill="#0b4a85"/><path d="M8 10h4v4H8z" fill="#f25022"/><path d="M13 10h4v4h-4z" fill="#7fba00"/><path d="M8 15h4v4H8z" fill="#00a4ef"/><path d="M13 15h4v4h-4z" fill="#ffb900"/></svg>
<svg class="a" style="left:1052px;top:1044px" width="20" height="24" viewBox="0 0 20 24"><rect width="20" height="24" fill="#7a8a99"/><rect x="2" y="2" width="16" height="5" fill="#39b3e6"/><path d="M2 9h4v4H2zM8 9h4v4H8zM14 9h4v4h-4zM2 15h4v4H2zM8 15h4v4H8zM14 15h4v9h-4z" fill="#dfe5ea"/></svg>
<svg class="a" style="left:1098px;top:1045px" width="24" height="23" viewBox="0 0 24 23"><circle cx="12" cy="12" r="10.500" fill="none" stroke="#25a35a" stroke-width="2.500"/><path d="M8 7c-1 5 3 9 8 10l2-3-3-2-1 1c-2-1-3-2-3-4l1-1-2-3z" fill="#25a35a"/></svg>
<div class="a" style="left:1111px;top:1039px;width:15px;height:15px;border-radius:8px;background:#e0201c"></div><span class="t" style="left:1115px;top:1042px;color:#fff;font-size:10px;font-weight:bold">1</span>
<svg class="a" style="left:1147px;top:1044px" width="18" height="24" viewBox="0 0 18 24"><path d="M9 0c5 0 7 4 7 8 3 3 2 13-2 16H4C0 21-1 11 2 8c0-4 2-8 7-8z" fill="#5ca85c"/><circle cx="9" cy="7" r="3.500" fill="#a9d4a9"/><rect x="8" y="13" width="2.500" height="6" fill="#d5ecd5"/></svg>
<svg class="a" style="left:1190px;top:1045px" width="22" height="23" viewBox="0 0 22 23"><rect width="22" height="23" fill="#333"/><path d="M22 11v12h-8z" fill="#f5c518"/></svg>
<div class="a" style="left:1226px;top:1036px;width:40px;height:32px;background:#ecc0bc;border-radius:4px"></div>
<svg class="a" style="left:1234px;top:1044px" width="24" height="24" viewBox="0 0 24 24"><circle cx="12" cy="12" r="12" fill="#2a9fd8"/><path d="M4 12l15-6-3 13-4-3-2 3-1-5 7-5-9 4z" fill="#fff"/></svg>
<div class="a" style="left:1249px;top:1040px;width:15px;height:12px;background:#e53935;border-radius:4px"></div><span class="t" style="left:1250px;top:1042px;color:#fff;font-size:8.500px">81</span>
<svg class="a" style="left:1280px;top:1044px" width="20" height="24" viewBox="0 0 20 24"><path d="M4 1h15l-3 22H1z" fill="#0e7f86"/><path d="M14 6c-3-2-5 0-4 3s3 4 1 7-4 1-5 0" fill="none" stroke="#fff" stroke-width="2"/></svg>
<div class="a" style="left:1316px;top:1036px;width:38px;height:32px;background:#ececec;border-radius:4px"></div>
<svg class="a" style="left:1323px;top:1046px" width="22" height="22" viewBox="0 0 24 24"><circle cx="12" cy="12" r="12" fill="#34a853"/><path d="M12 0a12 12 0 0 1 10.400 6H12a6 6 0 0 0-5.200 3L2 3a12 12 0 0 1 10-3z" fill="#ea4335"/><path d="M22.400 6A12 12 0 0 1 12 24l5.200-9A6 6 0 0 0 16 8z" fill="#fbbc04"/><circle cx="12" cy="12" r="5.500" fill="#fff"/><circle cx="12" cy="12" r="4.300" fill="#4285f4"/></svg>
<div class="a" style="left:1333px;top:1037px;width:18px;height:18px;border-radius:9px;background:#5c6bc0"></div><span class="t" style="left:1338px;top:1041px;color:#dde;font-size:9.500px">M</span>
<span class="t" style="left:1856px;top:1042px;color:#333;font-size:11.500px">6:01 AM</span>
<span class="t" style="left:1846px;top:1059px;color:#333;font-size:11.500px">8/15/2025</span>
</body></html>
